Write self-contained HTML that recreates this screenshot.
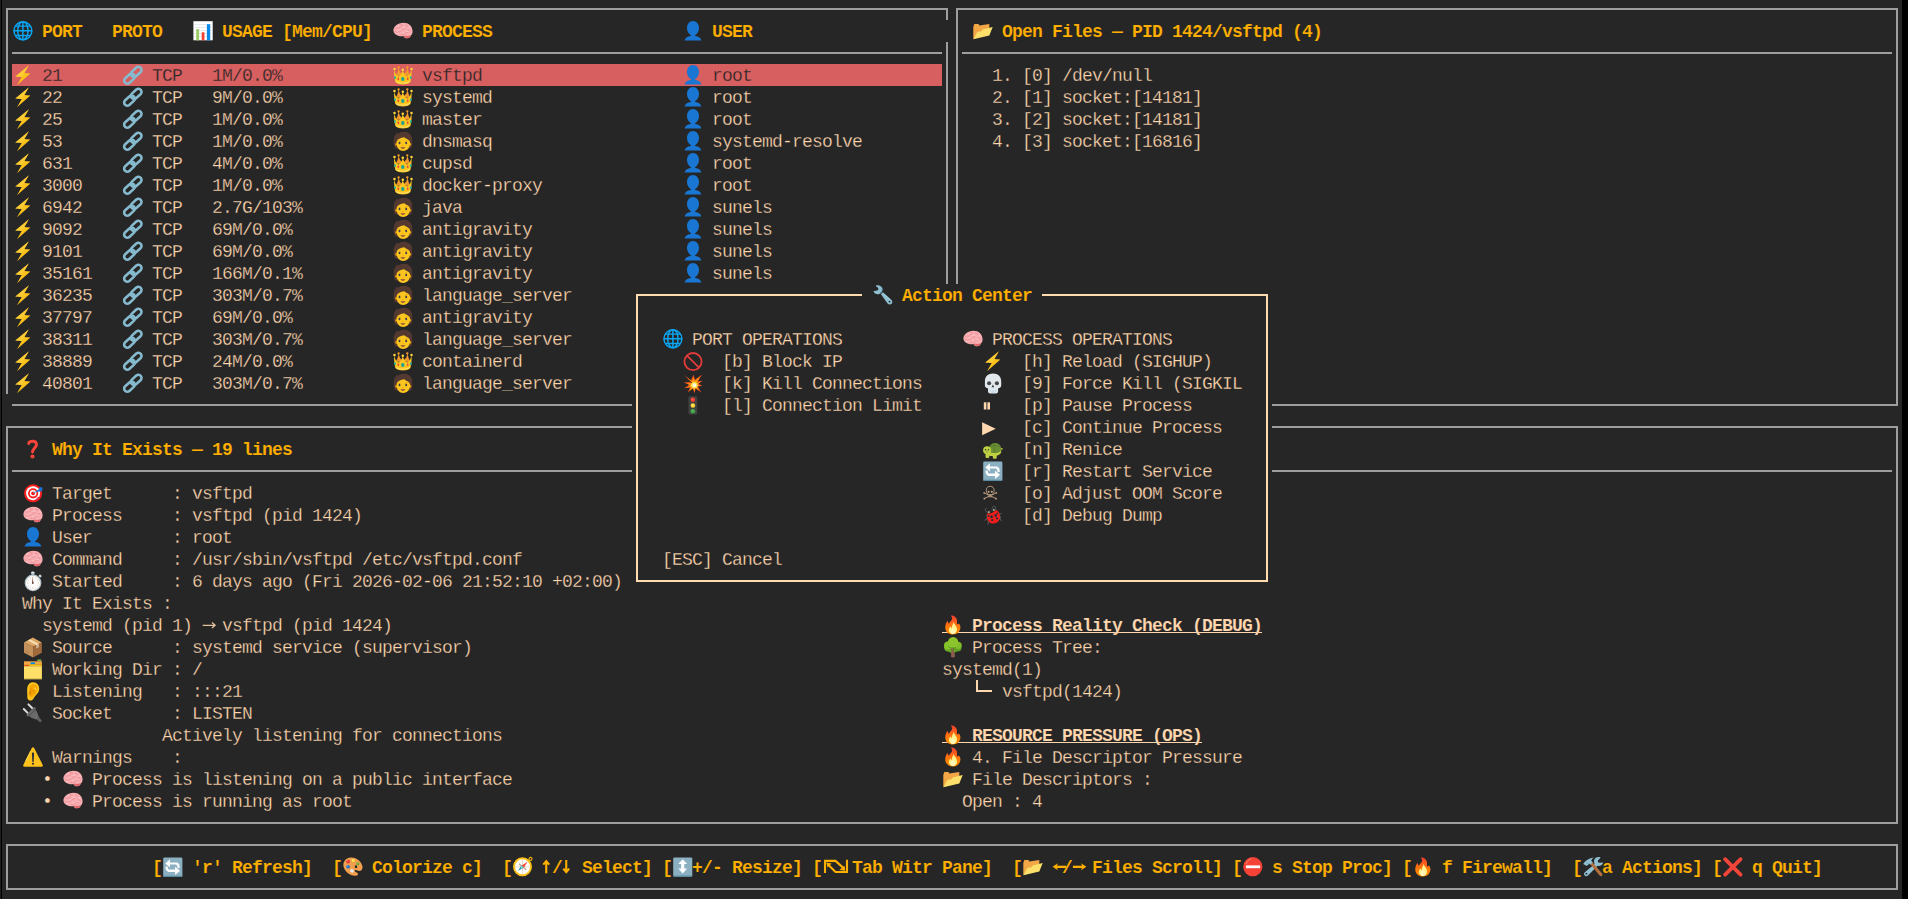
<!DOCTYPE html>
<html><head><meta charset="utf-8"><title>witr</title><style>
html,body{margin:0;padding:0}
body{width:1908px;height:899px;overflow:hidden;background:#262626;position:relative;font-family:"Liberation Mono",monospace}
#scr{position:absolute;left:0;top:0;width:1908px;height:899px;overflow:hidden;background:#262626}
.b{position:absolute}
.t{position:absolute;white-space:pre;font-family:"Liberation Mono",monospace;font-size:18px;line-height:22px;height:22px;letter-spacing:-0.8px;color:#ffd7af;margin-top:1.2px}
.t{-webkit-text-stroke:0.28px #262626}
.h{color:#ffaf00;font-weight:bold;-webkit-text-stroke:0.12px #262626}
.bt{font-weight:bold;-webkit-text-stroke:0.12px #262626}
.s{color:#262626;-webkit-text-stroke:0.28px #d75f5f}
.e{position:absolute;overflow:visible}
</style></head><body><div id="scr">
<svg width="0" height="0" style="position:absolute"><defs><linearGradient id="gfire" x1="0" y1="0" x2="0" y2="1"><stop offset="0" stop-color="#f23c30"/><stop offset=".3" stop-color="#fb5a1e"/><stop offset=".6" stop-color="#ff7a08"/><stop offset="1" stop-color="#ff9000"/></linearGradient></defs></svg>
<div class="b" style="left:0px;top:0px;width:1px;height:899px;background:#1d1d1d;"></div>
<div class="b" style="left:1px;top:0px;width:1px;height:899px;background:#000;"></div>
<div class="b" style="left:1902px;top:0px;width:6px;height:899px;background:#000;"></div>
<div class="b" style="left:6px;top:8px;width:942px;height:2px;background:#9e9e9e;"></div>
<div class="b" style="left:6px;top:8px;width:2px;height:386px;background:#9e9e9e;"></div>
<div class="b" style="left:946px;top:8px;width:2px;height:12px;background:#9e9e9e;"></div>
<div class="b" style="left:946px;top:42px;width:2px;height:363px;background:#9e9e9e;"></div>
<div class="b" style="left:12px;top:52px;width:930px;height:2px;background:#9e9e9e;"></div>
<div class="b" style="left:12px;top:404px;width:936px;height:2px;background:#9e9e9e;"></div>
<div class="b" style="left:956px;top:8px;width:942px;height:2px;background:#9e9e9e;"></div>
<div class="b" style="left:956px;top:8px;width:2px;height:398px;background:#9e9e9e;"></div>
<div class="b" style="left:1896px;top:8px;width:2px;height:398px;background:#9e9e9e;"></div>
<div class="b" style="left:962px;top:52px;width:930px;height:2px;background:#9e9e9e;"></div>
<div class="b" style="left:956px;top:404px;width:942px;height:2px;background:#9e9e9e;"></div>
<div class="b" style="left:6px;top:426px;width:1892px;height:2px;background:#9e9e9e;"></div>
<div class="b" style="left:6px;top:426px;width:2px;height:398px;background:#9e9e9e;"></div>
<div class="b" style="left:1896px;top:426px;width:2px;height:398px;background:#9e9e9e;"></div>
<div class="b" style="left:12px;top:470px;width:1880px;height:2px;background:#9e9e9e;"></div>
<div class="b" style="left:6px;top:822px;width:1892px;height:2px;background:#9e9e9e;"></div>
<div class="b" style="left:6px;top:844px;width:1892px;height:2px;background:#9e9e9e;"></div>
<div class="b" style="left:6px;top:844px;width:2px;height:46px;background:#9e9e9e;"></div>
<div class="b" style="left:1896px;top:844px;width:2px;height:46px;background:#9e9e9e;"></div>
<div class="b" style="left:6px;top:888px;width:1892px;height:2px;background:#9e9e9e;"></div>
<svg class="e" style="left:12.9px;top:20.7px" width="20" height="21" viewBox="0 0 20 21"><g fill="none" stroke="#0ba6f3" stroke-width="1.45"><circle cx="9.9" cy="9.8" r="9"/><ellipse cx="9.9" cy="9.8" rx="5.2" ry="9"/><path d="M9.9 .8v18M.9 9.8h18M2.6 5.1h14.6M2.6 14.4h14.6"/></g></svg>
<span class="t h" style="left:42px;top:20px">PORT</span>
<span class="t h" style="left:112px;top:20px">PROTO</span>
<svg class="e" style="left:192.9px;top:20.7px" width="20" height="21" viewBox="0 0 20 21"><rect x=".4" y=".2" width="19.3" height="19.1" fill="#fff"/><path d="M1.5 3.6h17M1.5 6.5h17M1.5 9.5h17M1.5 12.5h17M1.5 15.5h17" stroke="#e3e7ea" stroke-width=".9"/><rect x="3.2" y="8.1" width="2.9" height="11.2" fill="#9ccc65"/><rect x="8.7" y="11.3" width="2.7" height="8" fill="#f4402c"/><rect x="13.9" y="3.2" width="3.3" height="16.1" fill="#0a8ae8"/></svg>
<span class="t h" style="left:222px;top:20px">USAGE [Mem/CPU]</span>
<svg class="e" style="left:392.9px;top:20.7px" width="20" height="21" viewBox="0 0 20 21"><path d="M.4 9.600C.3 5.600 4.500 1.700 10.600 1.700c5.200 0 8.400 3.300 8.900 7.500.4 2.900-.6 4.600-2 5.600.2 1.500-1.600 2.500-3.600 2.500-1.800 0-3-.9-3.400-2.300-1.600.3-4.600.4-5.900-.5C2.400 14 .5 12.300.4 9.600z" fill="#f6acb0"/><path d="M10.700 14.600c1.800.4 4.900.5 6.800-.1.200 1.600-1.500 2.800-3.500 2.800-1.900 0-3.100-1.200-3.300-2.700z" fill="#e0686c"/><g fill="none" stroke="#ec8a90" stroke-width=".8"><path d="M2.500 7.500c1.500-1.500 2.500.5 4-.8s1.500-2.700 3.500-2.500M4.500 11.500c1-1.800 3-.5 4.200-2.200s3-1 4.300-2.700M7.500 13.800c1.500-1 2.800.3 4.200-1.200s2.700-.5 4.300-2M12 3.800c1 1.200 2.700.5 3.700 2.200M1.800 10.300c1 .3 1.700 1.500 2.700 1.200M14.500 8.500c1 .5 2 .2 3 1.200M6 5c.5-1 1.500-1.500 2.500-1.500"/></g><g fill="none" stroke="#fcd0d2" stroke-width=".8" opacity=".9"><path d="M3.500 5.800c1-1 2-1.300 3-1.300M9.500 6.500c1-.5 2-.5 3 .2M5.500 9.300c.8-.6 1.800-.8 2.600-.3M13 11c1-.6 2-.6 3-.2M3 12.300c.8.500 1.600.6 2.400.4M9 12c.8-.5 1.600-.5 2.400-.2M15.500 5.500c.8.600 1.300 1.400 1.600 2.300"/></g></svg>
<span class="t h" style="left:422px;top:20px">PROCESS</span>
<svg class="e" style="left:682.9px;top:20.7px" width="20" height="21" viewBox="0 0 20 21"><path d="M10 0c3.400 0 5.900 2.800 6 6.800.1 3.300-1.700 6.300-4 7.400l.3.700c3.300.5 5.900 2.100 6.100 4.700H1.600c.2-2.600 2.800-4.200 6.100-4.700l.3-.7c-2.300-1.100-4.100-4.100-4-7.400C4.100 2.800 6.600 0 10 0z" fill="#1976d2"/></svg>
<span class="t h" style="left:712px;top:20px">USER</span>
<div class="b" style="left:12px;top:64px;width:930px;height:22px;background:#d75f5f;"></div>
<svg class="e" style="left:12.9px;top:64.7px" width="20" height="21" viewBox="0 0 20 21"><path d="M15.900.2L2.300 11.400l6.400.600L4 20.200 17.400 8.500l-6-.4z" fill="#fbc21b"/><path d="M15.900.2L2.300 11.400l6.400.600 1.200-2.100 1.500-1.800z" fill="#ffd54a" opacity=".55"/></svg>
<span class="t s" style="left:42px;top:64px">21</span>
<svg class="e" style="left:122.9px;top:64.7px" width="20" height="21" viewBox="0 0 20 21"><g fill="none" stroke="#86bace" stroke-width="2.600"><rect x="-6.100" y="-3.100" width="12.200" height="6.200" rx="3.100" transform="translate(13.200 6.900) rotate(-42)"/><rect x="-6.100" y="-3.100" width="12.200" height="6.200" rx="3.100" transform="translate(6.500 13.600) rotate(-42)"/></g></svg>
<span class="t s" style="left:152px;top:64px">TCP</span>
<span class="t s" style="left:212px;top:64px">1M/0.0%</span>
<svg class="e" style="left:392.9px;top:64.7px" width="20" height="21" viewBox="0 0 20 21"><path d="M5.600 2.200c-.4 3.400-1.300 6.300-3 8.500h15c-1.700-2.200-2.600-5.100-3-8.500-.5 3.300-1.900 6.100-4.700 7.300C7.300 8.300 6.100 5.500 5.600 2.200z" fill="#f29a2e"/><circle cx="5.600" cy="2.500" r="1.150" fill="#f9a024"/><circle cx="14.300" cy="2.500" r="1.150" fill="#f9a024"/><path d="M1.300 4.200C1.700 8 3.200 10.400 5.700 11.600 8 10.300 9.300 7.800 9.800 4.600c.5 3.200 1.800 5.700 4.100 7 2.500-1.200 4-3.600 4.500-7.400.6 4-.1 8.800-1 12.700-1.800 1.800-4.600 2.500-7.500 2.500s-5.700-.7-7.500-2.500C1.500 13 .7 8.200 1.300 4.200z" fill="#fcc51f"/><circle cx="1.500" cy="4.100" r="1.250" fill="#ffd638"/><circle cx="18.500" cy="4.100" r="1.250" fill="#ffd638"/><circle cx="9.800" cy="4.800" r="1.300" fill="#ffd638"/><path d="M2.600 16.300c2 1.400 4.600 1.800 7.200 1.800s5.200-.4 7.200-1.800" fill="none" stroke="#fff3a0" stroke-width=".8" opacity=".8"/><ellipse cx="9.800" cy="14" rx="1.700" ry="2" fill="#17a398"/><ellipse cx="5.300" cy="13.800" rx=".85" ry="1.300" fill="#f2453d"/><ellipse cx="14.700" cy="13.800" rx=".85" ry="1.300" fill="#f2453d"/><ellipse cx="2" cy="12.400" rx=".9" ry="1.500" fill="#26b5a0"/><ellipse cx="17.800" cy="12.400" rx=".9" ry="1.500" fill="#26b5a0"/></svg>
<span class="t s" style="left:422px;top:64px">vsftpd</span>
<svg class="e" style="left:682.9px;top:64.7px" width="20" height="21" viewBox="0 0 20 21"><path d="M10 0c3.400 0 5.900 2.800 6 6.800.1 3.300-1.700 6.300-4 7.400l.3.700c3.300.5 5.900 2.100 6.100 4.700H1.600c.2-2.600 2.800-4.200 6.100-4.700l.3-.7c-2.300-1.100-4.100-4.100-4-7.400C4.100 2.800 6.600 0 10 0z" fill="#1976d2"/></svg>
<span class="t s" style="left:712px;top:64px">root</span>
<svg class="e" style="left:12.9px;top:86.7px" width="20" height="21" viewBox="0 0 20 21"><path d="M15.900.2L2.300 11.400l6.400.600L4 20.200 17.400 8.500l-6-.4z" fill="#fbc21b"/><path d="M15.900.2L2.300 11.400l6.400.600 1.200-2.100 1.500-1.800z" fill="#ffd54a" opacity=".55"/></svg>
<span class="t " style="left:42px;top:86px">22</span>
<svg class="e" style="left:122.9px;top:86.7px" width="20" height="21" viewBox="0 0 20 21"><g fill="none" stroke="#86bace" stroke-width="2.600"><rect x="-6.100" y="-3.100" width="12.200" height="6.200" rx="3.100" transform="translate(13.200 6.900) rotate(-42)"/><rect x="-6.100" y="-3.100" width="12.200" height="6.200" rx="3.100" transform="translate(6.500 13.600) rotate(-42)"/></g></svg>
<span class="t " style="left:152px;top:86px">TCP</span>
<span class="t " style="left:212px;top:86px">9M/0.0%</span>
<svg class="e" style="left:392.9px;top:86.7px" width="20" height="21" viewBox="0 0 20 21"><path d="M5.600 2.200c-.4 3.400-1.300 6.300-3 8.500h15c-1.700-2.200-2.600-5.100-3-8.500-.5 3.300-1.900 6.100-4.700 7.300C7.300 8.300 6.100 5.500 5.600 2.200z" fill="#f29a2e"/><circle cx="5.600" cy="2.500" r="1.150" fill="#f9a024"/><circle cx="14.300" cy="2.500" r="1.150" fill="#f9a024"/><path d="M1.300 4.200C1.700 8 3.200 10.400 5.700 11.600 8 10.300 9.300 7.800 9.800 4.600c.5 3.200 1.800 5.700 4.100 7 2.500-1.200 4-3.600 4.500-7.400.6 4-.1 8.800-1 12.700-1.800 1.800-4.600 2.500-7.500 2.500s-5.700-.7-7.500-2.500C1.500 13 .7 8.200 1.300 4.200z" fill="#fcc51f"/><circle cx="1.500" cy="4.100" r="1.250" fill="#ffd638"/><circle cx="18.500" cy="4.100" r="1.250" fill="#ffd638"/><circle cx="9.800" cy="4.800" r="1.300" fill="#ffd638"/><path d="M2.600 16.300c2 1.400 4.600 1.800 7.200 1.800s5.200-.4 7.200-1.800" fill="none" stroke="#fff3a0" stroke-width=".8" opacity=".8"/><ellipse cx="9.800" cy="14" rx="1.700" ry="2" fill="#17a398"/><ellipse cx="5.300" cy="13.800" rx=".85" ry="1.300" fill="#f2453d"/><ellipse cx="14.700" cy="13.800" rx=".85" ry="1.300" fill="#f2453d"/><ellipse cx="2" cy="12.400" rx=".9" ry="1.500" fill="#26b5a0"/><ellipse cx="17.800" cy="12.400" rx=".9" ry="1.500" fill="#26b5a0"/></svg>
<span class="t " style="left:422px;top:86px">systemd</span>
<svg class="e" style="left:682.9px;top:86.7px" width="20" height="21" viewBox="0 0 20 21"><path d="M10 0c3.400 0 5.900 2.800 6 6.800.1 3.300-1.700 6.300-4 7.400l.3.700c3.300.5 5.900 2.100 6.100 4.700H1.600c.2-2.600 2.800-4.200 6.100-4.700l.3-.7c-2.300-1.100-4.100-4.100-4-7.400C4.100 2.800 6.600 0 10 0z" fill="#1976d2"/></svg>
<span class="t " style="left:712px;top:86px">root</span>
<svg class="e" style="left:12.9px;top:108.7px" width="20" height="21" viewBox="0 0 20 21"><path d="M15.900.2L2.300 11.400l6.400.600L4 20.200 17.400 8.500l-6-.4z" fill="#fbc21b"/><path d="M15.900.2L2.300 11.400l6.400.600 1.200-2.100 1.500-1.800z" fill="#ffd54a" opacity=".55"/></svg>
<span class="t " style="left:42px;top:108px">25</span>
<svg class="e" style="left:122.9px;top:108.7px" width="20" height="21" viewBox="0 0 20 21"><g fill="none" stroke="#86bace" stroke-width="2.600"><rect x="-6.100" y="-3.100" width="12.200" height="6.200" rx="3.100" transform="translate(13.200 6.900) rotate(-42)"/><rect x="-6.100" y="-3.100" width="12.200" height="6.200" rx="3.100" transform="translate(6.500 13.600) rotate(-42)"/></g></svg>
<span class="t " style="left:152px;top:108px">TCP</span>
<span class="t " style="left:212px;top:108px">1M/0.0%</span>
<svg class="e" style="left:392.9px;top:108.7px" width="20" height="21" viewBox="0 0 20 21"><path d="M5.600 2.200c-.4 3.400-1.300 6.300-3 8.500h15c-1.700-2.200-2.600-5.100-3-8.500-.5 3.300-1.900 6.100-4.700 7.300C7.300 8.300 6.100 5.500 5.600 2.200z" fill="#f29a2e"/><circle cx="5.600" cy="2.500" r="1.150" fill="#f9a024"/><circle cx="14.300" cy="2.500" r="1.150" fill="#f9a024"/><path d="M1.300 4.200C1.700 8 3.200 10.400 5.700 11.600 8 10.300 9.300 7.800 9.800 4.600c.5 3.200 1.800 5.700 4.100 7 2.500-1.200 4-3.600 4.500-7.400.6 4-.1 8.800-1 12.700-1.800 1.800-4.600 2.500-7.500 2.500s-5.700-.7-7.500-2.500C1.500 13 .7 8.200 1.300 4.200z" fill="#fcc51f"/><circle cx="1.500" cy="4.100" r="1.250" fill="#ffd638"/><circle cx="18.500" cy="4.100" r="1.250" fill="#ffd638"/><circle cx="9.800" cy="4.800" r="1.300" fill="#ffd638"/><path d="M2.600 16.300c2 1.400 4.600 1.800 7.200 1.800s5.200-.4 7.200-1.800" fill="none" stroke="#fff3a0" stroke-width=".8" opacity=".8"/><ellipse cx="9.800" cy="14" rx="1.700" ry="2" fill="#17a398"/><ellipse cx="5.300" cy="13.800" rx=".85" ry="1.300" fill="#f2453d"/><ellipse cx="14.700" cy="13.800" rx=".85" ry="1.300" fill="#f2453d"/><ellipse cx="2" cy="12.400" rx=".9" ry="1.500" fill="#26b5a0"/><ellipse cx="17.800" cy="12.400" rx=".9" ry="1.500" fill="#26b5a0"/></svg>
<span class="t " style="left:422px;top:108px">master</span>
<svg class="e" style="left:682.9px;top:108.7px" width="20" height="21" viewBox="0 0 20 21"><path d="M10 0c3.400 0 5.900 2.800 6 6.800.1 3.300-1.700 6.300-4 7.400l.3.700c3.300.5 5.900 2.100 6.100 4.700H1.600c.2-2.600 2.800-4.200 6.100-4.700l.3-.7c-2.300-1.100-4.100-4.100-4-7.400C4.100 2.800 6.600 0 10 0z" fill="#1976d2"/></svg>
<span class="t " style="left:712px;top:108px">root</span>
<svg class="e" style="left:12.9px;top:130.7px" width="20" height="21" viewBox="0 0 20 21"><path d="M15.900.2L2.300 11.400l6.400.600L4 20.200 17.400 8.500l-6-.4z" fill="#fbc21b"/><path d="M15.900.2L2.300 11.400l6.400.600 1.200-2.100 1.500-1.800z" fill="#ffd54a" opacity=".55"/></svg>
<span class="t " style="left:42px;top:130px">53</span>
<svg class="e" style="left:122.9px;top:130.7px" width="20" height="21" viewBox="0 0 20 21"><g fill="none" stroke="#86bace" stroke-width="2.600"><rect x="-6.100" y="-3.100" width="12.200" height="6.200" rx="3.100" transform="translate(13.200 6.900) rotate(-42)"/><rect x="-6.100" y="-3.100" width="12.200" height="6.200" rx="3.100" transform="translate(6.500 13.600) rotate(-42)"/></g></svg>
<span class="t " style="left:152px;top:130px">TCP</span>
<span class="t " style="left:212px;top:130px">1M/0.0%</span>
<svg class="e" style="left:392.9px;top:130.7px" width="20" height="21" viewBox="0 0 20 21"><path d="M.7 10.500C.3 5.500 3.300 1.800 4.800 2.900 6.500 1.300 9 .6 11.200 .7c5.600.2 8.700 4.300 7.900 9.200.5 2.100.2 3.900-.500 5 .6 1.200-.100 2.500-1.400 2.700H3c-1.300-.2-2-1.500-1.400-2.700-.8-1.100-1.100-2.600-.9-4.400z" fill="#543930"/><path d="M3.500 1.300l1.600 1.500-2 .7z" fill="#543930"/><ellipse cx="3.100" cy="13.500" rx=".9" ry="1.400" fill="#e59600"/><ellipse cx="17.400" cy="13.400" rx=".9" ry="1.400" fill="#e59600"/><path d="M3.500 12.300c0-2.500 1-3.700 2.800-4.600 1.500-.8 3.200-1.200 4.900-1.500 1.100 1 2.400 1.500 3.700 2.200 1.500.800 2.200 2 2.200 3.900 0 4.300-3 7.700-6.800 7.700s-6.800-3.200-6.800-7.700z" fill="#fcc51f"/><ellipse cx="6.500" cy="12" rx=".95" ry="1.250" fill="#3b3b48"/><ellipse cx="13.200" cy="12" rx=".95" ry="1.250" fill="#3b3b48"/><path d="M5.500 10.200c.6-.4 1.400-.4 2 0M12.200 10.200c.6-.4 1.400-.4 2 0" stroke="#c98a1a" stroke-width=".6" fill="none"/><path d="M7.600 15.900c1.300.6 3.200.6 4.500 0-.2 1.200-1.100 1.800-2.250 1.800s-2.050-.6-2.250-1.800z" fill="#8a4b3c"/><path d="M9 14.600c.5.400 1.100.4 1.600 0" stroke="#f0a000" stroke-width=".7" fill="none"/></svg>
<span class="t " style="left:422px;top:130px">dnsmasq</span>
<svg class="e" style="left:682.9px;top:130.7px" width="20" height="21" viewBox="0 0 20 21"><path d="M10 0c3.400 0 5.900 2.800 6 6.800.1 3.300-1.700 6.300-4 7.400l.3.700c3.300.5 5.900 2.100 6.100 4.700H1.600c.2-2.600 2.800-4.200 6.100-4.700l.3-.7c-2.300-1.100-4.100-4.100-4-7.400C4.100 2.800 6.600 0 10 0z" fill="#1976d2"/></svg>
<span class="t " style="left:712px;top:130px">systemd-resolve</span>
<svg class="e" style="left:12.9px;top:152.7px" width="20" height="21" viewBox="0 0 20 21"><path d="M15.900.2L2.300 11.400l6.400.600L4 20.200 17.400 8.500l-6-.4z" fill="#fbc21b"/><path d="M15.900.2L2.300 11.400l6.400.600 1.200-2.100 1.500-1.800z" fill="#ffd54a" opacity=".55"/></svg>
<span class="t " style="left:42px;top:152px">631</span>
<svg class="e" style="left:122.9px;top:152.7px" width="20" height="21" viewBox="0 0 20 21"><g fill="none" stroke="#86bace" stroke-width="2.600"><rect x="-6.100" y="-3.100" width="12.200" height="6.200" rx="3.100" transform="translate(13.200 6.900) rotate(-42)"/><rect x="-6.100" y="-3.100" width="12.200" height="6.200" rx="3.100" transform="translate(6.500 13.600) rotate(-42)"/></g></svg>
<span class="t " style="left:152px;top:152px">TCP</span>
<span class="t " style="left:212px;top:152px">4M/0.0%</span>
<svg class="e" style="left:392.9px;top:152.7px" width="20" height="21" viewBox="0 0 20 21"><path d="M5.600 2.200c-.4 3.400-1.300 6.300-3 8.500h15c-1.700-2.200-2.600-5.100-3-8.500-.5 3.300-1.900 6.100-4.700 7.300C7.300 8.300 6.100 5.500 5.600 2.200z" fill="#f29a2e"/><circle cx="5.600" cy="2.500" r="1.150" fill="#f9a024"/><circle cx="14.300" cy="2.500" r="1.150" fill="#f9a024"/><path d="M1.300 4.200C1.700 8 3.200 10.400 5.700 11.600 8 10.300 9.300 7.800 9.800 4.600c.5 3.200 1.800 5.700 4.100 7 2.500-1.200 4-3.600 4.500-7.400.6 4-.1 8.800-1 12.700-1.800 1.800-4.600 2.500-7.500 2.500s-5.700-.7-7.500-2.500C1.500 13 .7 8.200 1.300 4.200z" fill="#fcc51f"/><circle cx="1.500" cy="4.100" r="1.250" fill="#ffd638"/><circle cx="18.500" cy="4.100" r="1.250" fill="#ffd638"/><circle cx="9.800" cy="4.800" r="1.300" fill="#ffd638"/><path d="M2.600 16.300c2 1.400 4.600 1.800 7.200 1.800s5.200-.4 7.200-1.800" fill="none" stroke="#fff3a0" stroke-width=".8" opacity=".8"/><ellipse cx="9.800" cy="14" rx="1.700" ry="2" fill="#17a398"/><ellipse cx="5.300" cy="13.800" rx=".85" ry="1.300" fill="#f2453d"/><ellipse cx="14.700" cy="13.800" rx=".85" ry="1.300" fill="#f2453d"/><ellipse cx="2" cy="12.400" rx=".9" ry="1.500" fill="#26b5a0"/><ellipse cx="17.800" cy="12.400" rx=".9" ry="1.500" fill="#26b5a0"/></svg>
<span class="t " style="left:422px;top:152px">cupsd</span>
<svg class="e" style="left:682.9px;top:152.7px" width="20" height="21" viewBox="0 0 20 21"><path d="M10 0c3.400 0 5.900 2.800 6 6.800.1 3.300-1.700 6.300-4 7.400l.3.700c3.300.5 5.900 2.100 6.100 4.700H1.600c.2-2.600 2.800-4.200 6.100-4.700l.3-.7c-2.300-1.100-4.100-4.100-4-7.400C4.100 2.800 6.600 0 10 0z" fill="#1976d2"/></svg>
<span class="t " style="left:712px;top:152px">root</span>
<svg class="e" style="left:12.9px;top:174.7px" width="20" height="21" viewBox="0 0 20 21"><path d="M15.900.2L2.300 11.400l6.400.600L4 20.200 17.400 8.500l-6-.4z" fill="#fbc21b"/><path d="M15.900.2L2.300 11.400l6.400.600 1.200-2.100 1.500-1.800z" fill="#ffd54a" opacity=".55"/></svg>
<span class="t " style="left:42px;top:174px">3000</span>
<svg class="e" style="left:122.9px;top:174.7px" width="20" height="21" viewBox="0 0 20 21"><g fill="none" stroke="#86bace" stroke-width="2.600"><rect x="-6.100" y="-3.100" width="12.200" height="6.200" rx="3.100" transform="translate(13.200 6.900) rotate(-42)"/><rect x="-6.100" y="-3.100" width="12.200" height="6.200" rx="3.100" transform="translate(6.500 13.600) rotate(-42)"/></g></svg>
<span class="t " style="left:152px;top:174px">TCP</span>
<span class="t " style="left:212px;top:174px">1M/0.0%</span>
<svg class="e" style="left:392.9px;top:174.7px" width="20" height="21" viewBox="0 0 20 21"><path d="M5.600 2.200c-.4 3.400-1.300 6.300-3 8.500h15c-1.700-2.200-2.600-5.100-3-8.500-.5 3.300-1.900 6.100-4.700 7.300C7.300 8.300 6.100 5.500 5.600 2.200z" fill="#f29a2e"/><circle cx="5.600" cy="2.500" r="1.150" fill="#f9a024"/><circle cx="14.300" cy="2.500" r="1.150" fill="#f9a024"/><path d="M1.300 4.200C1.700 8 3.200 10.400 5.700 11.600 8 10.300 9.300 7.800 9.800 4.600c.5 3.200 1.800 5.700 4.100 7 2.500-1.200 4-3.600 4.500-7.400.6 4-.1 8.800-1 12.700-1.800 1.800-4.600 2.500-7.500 2.500s-5.700-.7-7.500-2.500C1.500 13 .7 8.200 1.300 4.200z" fill="#fcc51f"/><circle cx="1.500" cy="4.100" r="1.250" fill="#ffd638"/><circle cx="18.500" cy="4.100" r="1.250" fill="#ffd638"/><circle cx="9.800" cy="4.800" r="1.300" fill="#ffd638"/><path d="M2.600 16.300c2 1.400 4.600 1.800 7.200 1.800s5.200-.4 7.200-1.800" fill="none" stroke="#fff3a0" stroke-width=".8" opacity=".8"/><ellipse cx="9.800" cy="14" rx="1.700" ry="2" fill="#17a398"/><ellipse cx="5.300" cy="13.800" rx=".85" ry="1.300" fill="#f2453d"/><ellipse cx="14.700" cy="13.800" rx=".85" ry="1.300" fill="#f2453d"/><ellipse cx="2" cy="12.400" rx=".9" ry="1.500" fill="#26b5a0"/><ellipse cx="17.800" cy="12.400" rx=".9" ry="1.500" fill="#26b5a0"/></svg>
<span class="t " style="left:422px;top:174px">docker-proxy</span>
<svg class="e" style="left:682.9px;top:174.7px" width="20" height="21" viewBox="0 0 20 21"><path d="M10 0c3.400 0 5.900 2.800 6 6.800.1 3.300-1.700 6.300-4 7.400l.3.700c3.300.5 5.900 2.100 6.100 4.700H1.600c.2-2.600 2.800-4.200 6.100-4.700l.3-.7c-2.300-1.100-4.100-4.100-4-7.400C4.100 2.800 6.600 0 10 0z" fill="#1976d2"/></svg>
<span class="t " style="left:712px;top:174px">root</span>
<svg class="e" style="left:12.9px;top:196.7px" width="20" height="21" viewBox="0 0 20 21"><path d="M15.900.2L2.300 11.400l6.400.600L4 20.200 17.400 8.500l-6-.4z" fill="#fbc21b"/><path d="M15.900.2L2.300 11.400l6.400.600 1.200-2.100 1.500-1.800z" fill="#ffd54a" opacity=".55"/></svg>
<span class="t " style="left:42px;top:196px">6942</span>
<svg class="e" style="left:122.9px;top:196.7px" width="20" height="21" viewBox="0 0 20 21"><g fill="none" stroke="#86bace" stroke-width="2.600"><rect x="-6.100" y="-3.100" width="12.200" height="6.200" rx="3.100" transform="translate(13.200 6.900) rotate(-42)"/><rect x="-6.100" y="-3.100" width="12.200" height="6.200" rx="3.100" transform="translate(6.500 13.600) rotate(-42)"/></g></svg>
<span class="t " style="left:152px;top:196px">TCP</span>
<span class="t " style="left:212px;top:196px">2.7G/103%</span>
<svg class="e" style="left:392.9px;top:196.7px" width="20" height="21" viewBox="0 0 20 21"><path d="M.7 10.500C.3 5.500 3.300 1.800 4.800 2.900 6.500 1.300 9 .6 11.200 .7c5.600.2 8.700 4.300 7.900 9.200.5 2.100.2 3.900-.500 5 .6 1.200-.100 2.500-1.400 2.700H3c-1.300-.2-2-1.500-1.400-2.700-.8-1.100-1.100-2.600-.9-4.400z" fill="#543930"/><path d="M3.500 1.300l1.600 1.500-2 .7z" fill="#543930"/><ellipse cx="3.100" cy="13.500" rx=".9" ry="1.400" fill="#e59600"/><ellipse cx="17.400" cy="13.400" rx=".9" ry="1.400" fill="#e59600"/><path d="M3.500 12.300c0-2.500 1-3.700 2.800-4.600 1.500-.8 3.200-1.200 4.900-1.500 1.100 1 2.400 1.500 3.700 2.200 1.500.800 2.200 2 2.200 3.900 0 4.300-3 7.700-6.800 7.700s-6.800-3.200-6.800-7.700z" fill="#fcc51f"/><ellipse cx="6.500" cy="12" rx=".95" ry="1.250" fill="#3b3b48"/><ellipse cx="13.200" cy="12" rx=".95" ry="1.250" fill="#3b3b48"/><path d="M5.500 10.200c.6-.4 1.400-.4 2 0M12.200 10.200c.6-.4 1.400-.4 2 0" stroke="#c98a1a" stroke-width=".6" fill="none"/><path d="M7.600 15.900c1.300.6 3.200.6 4.500 0-.2 1.200-1.100 1.800-2.250 1.800s-2.050-.6-2.250-1.800z" fill="#8a4b3c"/><path d="M9 14.600c.5.400 1.100.4 1.600 0" stroke="#f0a000" stroke-width=".7" fill="none"/></svg>
<span class="t " style="left:422px;top:196px">java</span>
<svg class="e" style="left:682.9px;top:196.7px" width="20" height="21" viewBox="0 0 20 21"><path d="M10 0c3.400 0 5.900 2.800 6 6.800.1 3.300-1.700 6.300-4 7.400l.3.700c3.300.5 5.900 2.100 6.100 4.700H1.600c.2-2.600 2.800-4.200 6.100-4.700l.3-.7c-2.300-1.100-4.100-4.100-4-7.400C4.100 2.800 6.600 0 10 0z" fill="#1976d2"/></svg>
<span class="t " style="left:712px;top:196px">sunels</span>
<svg class="e" style="left:12.9px;top:218.7px" width="20" height="21" viewBox="0 0 20 21"><path d="M15.900.2L2.300 11.400l6.400.600L4 20.200 17.400 8.500l-6-.4z" fill="#fbc21b"/><path d="M15.900.2L2.300 11.400l6.400.600 1.200-2.100 1.500-1.800z" fill="#ffd54a" opacity=".55"/></svg>
<span class="t " style="left:42px;top:218px">9092</span>
<svg class="e" style="left:122.9px;top:218.7px" width="20" height="21" viewBox="0 0 20 21"><g fill="none" stroke="#86bace" stroke-width="2.600"><rect x="-6.100" y="-3.100" width="12.200" height="6.200" rx="3.100" transform="translate(13.200 6.900) rotate(-42)"/><rect x="-6.100" y="-3.100" width="12.200" height="6.200" rx="3.100" transform="translate(6.500 13.600) rotate(-42)"/></g></svg>
<span class="t " style="left:152px;top:218px">TCP</span>
<span class="t " style="left:212px;top:218px">69M/0.0%</span>
<svg class="e" style="left:392.9px;top:218.7px" width="20" height="21" viewBox="0 0 20 21"><path d="M.7 10.500C.3 5.500 3.300 1.800 4.800 2.900 6.500 1.300 9 .6 11.200 .7c5.600.2 8.700 4.300 7.900 9.200.5 2.100.2 3.900-.500 5 .6 1.200-.100 2.500-1.400 2.700H3c-1.300-.2-2-1.500-1.400-2.700-.8-1.100-1.100-2.600-.9-4.400z" fill="#543930"/><path d="M3.500 1.300l1.600 1.500-2 .7z" fill="#543930"/><ellipse cx="3.100" cy="13.500" rx=".9" ry="1.400" fill="#e59600"/><ellipse cx="17.400" cy="13.400" rx=".9" ry="1.400" fill="#e59600"/><path d="M3.500 12.300c0-2.500 1-3.700 2.800-4.600 1.500-.8 3.200-1.200 4.900-1.500 1.100 1 2.400 1.500 3.700 2.200 1.500.800 2.200 2 2.200 3.900 0 4.300-3 7.700-6.800 7.700s-6.800-3.200-6.800-7.700z" fill="#fcc51f"/><ellipse cx="6.500" cy="12" rx=".95" ry="1.250" fill="#3b3b48"/><ellipse cx="13.200" cy="12" rx=".95" ry="1.250" fill="#3b3b48"/><path d="M5.500 10.200c.6-.4 1.400-.4 2 0M12.200 10.200c.6-.4 1.400-.4 2 0" stroke="#c98a1a" stroke-width=".6" fill="none"/><path d="M7.600 15.900c1.300.6 3.200.6 4.500 0-.2 1.200-1.100 1.800-2.250 1.800s-2.050-.6-2.250-1.800z" fill="#8a4b3c"/><path d="M9 14.600c.5.400 1.100.4 1.600 0" stroke="#f0a000" stroke-width=".7" fill="none"/></svg>
<span class="t " style="left:422px;top:218px">antigravity</span>
<svg class="e" style="left:682.9px;top:218.7px" width="20" height="21" viewBox="0 0 20 21"><path d="M10 0c3.400 0 5.900 2.800 6 6.800.1 3.300-1.700 6.300-4 7.400l.3.700c3.300.5 5.900 2.100 6.100 4.700H1.600c.2-2.600 2.800-4.200 6.100-4.700l.3-.7c-2.300-1.100-4.100-4.100-4-7.400C4.100 2.800 6.600 0 10 0z" fill="#1976d2"/></svg>
<span class="t " style="left:712px;top:218px">sunels</span>
<svg class="e" style="left:12.9px;top:240.7px" width="20" height="21" viewBox="0 0 20 21"><path d="M15.900.2L2.300 11.400l6.400.600L4 20.200 17.400 8.500l-6-.4z" fill="#fbc21b"/><path d="M15.900.2L2.300 11.400l6.400.600 1.200-2.100 1.500-1.800z" fill="#ffd54a" opacity=".55"/></svg>
<span class="t " style="left:42px;top:240px">9101</span>
<svg class="e" style="left:122.9px;top:240.7px" width="20" height="21" viewBox="0 0 20 21"><g fill="none" stroke="#86bace" stroke-width="2.600"><rect x="-6.100" y="-3.100" width="12.200" height="6.200" rx="3.100" transform="translate(13.200 6.900) rotate(-42)"/><rect x="-6.100" y="-3.100" width="12.200" height="6.200" rx="3.100" transform="translate(6.500 13.600) rotate(-42)"/></g></svg>
<span class="t " style="left:152px;top:240px">TCP</span>
<span class="t " style="left:212px;top:240px">69M/0.0%</span>
<svg class="e" style="left:392.9px;top:240.7px" width="20" height="21" viewBox="0 0 20 21"><path d="M.7 10.500C.3 5.500 3.300 1.800 4.800 2.900 6.500 1.300 9 .6 11.200 .7c5.600.2 8.700 4.300 7.900 9.200.5 2.100.2 3.900-.500 5 .6 1.200-.100 2.500-1.400 2.700H3c-1.300-.2-2-1.500-1.400-2.700-.8-1.100-1.100-2.600-.9-4.400z" fill="#543930"/><path d="M3.500 1.300l1.600 1.500-2 .7z" fill="#543930"/><ellipse cx="3.100" cy="13.500" rx=".9" ry="1.400" fill="#e59600"/><ellipse cx="17.400" cy="13.400" rx=".9" ry="1.400" fill="#e59600"/><path d="M3.500 12.300c0-2.500 1-3.700 2.800-4.600 1.500-.8 3.200-1.200 4.900-1.500 1.100 1 2.400 1.500 3.700 2.200 1.500.800 2.200 2 2.200 3.900 0 4.300-3 7.700-6.800 7.700s-6.800-3.200-6.800-7.700z" fill="#fcc51f"/><ellipse cx="6.500" cy="12" rx=".95" ry="1.250" fill="#3b3b48"/><ellipse cx="13.200" cy="12" rx=".95" ry="1.250" fill="#3b3b48"/><path d="M5.500 10.200c.6-.4 1.400-.4 2 0M12.200 10.200c.6-.4 1.400-.4 2 0" stroke="#c98a1a" stroke-width=".6" fill="none"/><path d="M7.600 15.900c1.300.6 3.200.6 4.500 0-.2 1.200-1.100 1.800-2.250 1.800s-2.050-.6-2.250-1.800z" fill="#8a4b3c"/><path d="M9 14.600c.5.400 1.100.4 1.600 0" stroke="#f0a000" stroke-width=".7" fill="none"/></svg>
<span class="t " style="left:422px;top:240px">antigravity</span>
<svg class="e" style="left:682.9px;top:240.7px" width="20" height="21" viewBox="0 0 20 21"><path d="M10 0c3.400 0 5.900 2.800 6 6.800.1 3.300-1.700 6.300-4 7.400l.3.700c3.300.5 5.900 2.100 6.100 4.700H1.600c.2-2.600 2.800-4.200 6.100-4.700l.3-.7c-2.300-1.100-4.100-4.100-4-7.400C4.100 2.800 6.600 0 10 0z" fill="#1976d2"/></svg>
<span class="t " style="left:712px;top:240px">sunels</span>
<svg class="e" style="left:12.9px;top:262.7px" width="20" height="21" viewBox="0 0 20 21"><path d="M15.900.2L2.300 11.400l6.400.600L4 20.200 17.400 8.500l-6-.4z" fill="#fbc21b"/><path d="M15.900.2L2.300 11.400l6.400.600 1.200-2.100 1.500-1.800z" fill="#ffd54a" opacity=".55"/></svg>
<span class="t " style="left:42px;top:262px">35161</span>
<svg class="e" style="left:122.9px;top:262.7px" width="20" height="21" viewBox="0 0 20 21"><g fill="none" stroke="#86bace" stroke-width="2.600"><rect x="-6.100" y="-3.100" width="12.200" height="6.200" rx="3.100" transform="translate(13.200 6.900) rotate(-42)"/><rect x="-6.100" y="-3.100" width="12.200" height="6.200" rx="3.100" transform="translate(6.500 13.600) rotate(-42)"/></g></svg>
<span class="t " style="left:152px;top:262px">TCP</span>
<span class="t " style="left:212px;top:262px">166M/0.1%</span>
<svg class="e" style="left:392.9px;top:262.7px" width="20" height="21" viewBox="0 0 20 21"><path d="M.7 10.500C.3 5.500 3.300 1.800 4.800 2.900 6.500 1.300 9 .6 11.200 .7c5.600.2 8.700 4.300 7.900 9.200.5 2.100.2 3.900-.500 5 .6 1.200-.100 2.500-1.400 2.700H3c-1.300-.2-2-1.500-1.400-2.700-.8-1.100-1.100-2.600-.9-4.400z" fill="#543930"/><path d="M3.500 1.300l1.600 1.500-2 .7z" fill="#543930"/><ellipse cx="3.100" cy="13.500" rx=".9" ry="1.400" fill="#e59600"/><ellipse cx="17.400" cy="13.400" rx=".9" ry="1.400" fill="#e59600"/><path d="M3.500 12.300c0-2.500 1-3.700 2.800-4.600 1.500-.8 3.200-1.200 4.900-1.500 1.100 1 2.400 1.500 3.700 2.200 1.500.800 2.200 2 2.200 3.900 0 4.300-3 7.700-6.800 7.700s-6.800-3.200-6.800-7.700z" fill="#fcc51f"/><ellipse cx="6.500" cy="12" rx=".95" ry="1.250" fill="#3b3b48"/><ellipse cx="13.200" cy="12" rx=".95" ry="1.250" fill="#3b3b48"/><path d="M5.500 10.200c.6-.4 1.400-.4 2 0M12.200 10.200c.6-.4 1.400-.4 2 0" stroke="#c98a1a" stroke-width=".6" fill="none"/><path d="M7.600 15.900c1.300.6 3.200.6 4.500 0-.2 1.200-1.100 1.800-2.250 1.800s-2.050-.6-2.250-1.800z" fill="#8a4b3c"/><path d="M9 14.600c.5.400 1.100.4 1.600 0" stroke="#f0a000" stroke-width=".7" fill="none"/></svg>
<span class="t " style="left:422px;top:262px">antigravity</span>
<svg class="e" style="left:682.9px;top:262.7px" width="20" height="21" viewBox="0 0 20 21"><path d="M10 0c3.400 0 5.900 2.800 6 6.800.1 3.300-1.700 6.300-4 7.400l.3.700c3.300.5 5.900 2.100 6.100 4.700H1.600c.2-2.600 2.800-4.200 6.100-4.700l.3-.7c-2.300-1.100-4.100-4.100-4-7.400C4.100 2.800 6.600 0 10 0z" fill="#1976d2"/></svg>
<span class="t " style="left:712px;top:262px">sunels</span>
<svg class="e" style="left:12.9px;top:284.7px" width="20" height="21" viewBox="0 0 20 21"><path d="M15.900.2L2.300 11.400l6.400.600L4 20.200 17.400 8.500l-6-.4z" fill="#fbc21b"/><path d="M15.900.2L2.300 11.400l6.400.600 1.200-2.100 1.500-1.800z" fill="#ffd54a" opacity=".55"/></svg>
<span class="t " style="left:42px;top:284px">36235</span>
<svg class="e" style="left:122.9px;top:284.7px" width="20" height="21" viewBox="0 0 20 21"><g fill="none" stroke="#86bace" stroke-width="2.600"><rect x="-6.100" y="-3.100" width="12.200" height="6.200" rx="3.100" transform="translate(13.200 6.900) rotate(-42)"/><rect x="-6.100" y="-3.100" width="12.200" height="6.200" rx="3.100" transform="translate(6.500 13.600) rotate(-42)"/></g></svg>
<span class="t " style="left:152px;top:284px">TCP</span>
<span class="t " style="left:212px;top:284px">303M/0.7%</span>
<svg class="e" style="left:392.9px;top:284.7px" width="20" height="21" viewBox="0 0 20 21"><path d="M.7 10.500C.3 5.500 3.300 1.800 4.800 2.900 6.500 1.300 9 .6 11.200 .7c5.600.2 8.700 4.300 7.900 9.200.5 2.100.2 3.900-.500 5 .6 1.200-.100 2.500-1.400 2.700H3c-1.300-.2-2-1.500-1.400-2.700-.8-1.100-1.100-2.600-.9-4.400z" fill="#543930"/><path d="M3.500 1.300l1.600 1.500-2 .7z" fill="#543930"/><ellipse cx="3.100" cy="13.500" rx=".9" ry="1.400" fill="#e59600"/><ellipse cx="17.400" cy="13.400" rx=".9" ry="1.400" fill="#e59600"/><path d="M3.500 12.300c0-2.500 1-3.700 2.800-4.600 1.500-.8 3.200-1.200 4.900-1.500 1.100 1 2.400 1.500 3.700 2.200 1.500.800 2.200 2 2.200 3.900 0 4.300-3 7.700-6.800 7.700s-6.800-3.200-6.800-7.700z" fill="#fcc51f"/><ellipse cx="6.500" cy="12" rx=".95" ry="1.250" fill="#3b3b48"/><ellipse cx="13.200" cy="12" rx=".95" ry="1.250" fill="#3b3b48"/><path d="M5.500 10.200c.6-.4 1.400-.4 2 0M12.200 10.200c.6-.4 1.400-.4 2 0" stroke="#c98a1a" stroke-width=".6" fill="none"/><path d="M7.600 15.900c1.300.6 3.200.6 4.500 0-.2 1.200-1.100 1.800-2.250 1.800s-2.050-.6-2.250-1.800z" fill="#8a4b3c"/><path d="M9 14.600c.5.400 1.100.4 1.600 0" stroke="#f0a000" stroke-width=".7" fill="none"/></svg>
<span class="t " style="left:422px;top:284px">language_server</span>
<svg class="e" style="left:12.9px;top:306.7px" width="20" height="21" viewBox="0 0 20 21"><path d="M15.900.2L2.300 11.400l6.400.600L4 20.200 17.400 8.500l-6-.4z" fill="#fbc21b"/><path d="M15.900.2L2.300 11.400l6.400.600 1.200-2.100 1.500-1.800z" fill="#ffd54a" opacity=".55"/></svg>
<span class="t " style="left:42px;top:306px">37797</span>
<svg class="e" style="left:122.9px;top:306.7px" width="20" height="21" viewBox="0 0 20 21"><g fill="none" stroke="#86bace" stroke-width="2.600"><rect x="-6.100" y="-3.100" width="12.200" height="6.200" rx="3.100" transform="translate(13.200 6.900) rotate(-42)"/><rect x="-6.100" y="-3.100" width="12.200" height="6.200" rx="3.100" transform="translate(6.500 13.600) rotate(-42)"/></g></svg>
<span class="t " style="left:152px;top:306px">TCP</span>
<span class="t " style="left:212px;top:306px">69M/0.0%</span>
<svg class="e" style="left:392.9px;top:306.7px" width="20" height="21" viewBox="0 0 20 21"><path d="M.7 10.500C.3 5.500 3.300 1.800 4.800 2.900 6.500 1.300 9 .6 11.200 .7c5.600.2 8.700 4.300 7.900 9.200.5 2.100.2 3.900-.500 5 .6 1.200-.100 2.500-1.400 2.700H3c-1.300-.2-2-1.500-1.400-2.700-.8-1.100-1.100-2.600-.9-4.400z" fill="#543930"/><path d="M3.500 1.300l1.600 1.500-2 .7z" fill="#543930"/><ellipse cx="3.100" cy="13.500" rx=".9" ry="1.400" fill="#e59600"/><ellipse cx="17.400" cy="13.400" rx=".9" ry="1.400" fill="#e59600"/><path d="M3.500 12.300c0-2.500 1-3.700 2.800-4.600 1.500-.8 3.200-1.200 4.900-1.500 1.100 1 2.400 1.500 3.700 2.200 1.500.800 2.200 2 2.200 3.900 0 4.300-3 7.700-6.800 7.700s-6.800-3.200-6.800-7.700z" fill="#fcc51f"/><ellipse cx="6.500" cy="12" rx=".95" ry="1.250" fill="#3b3b48"/><ellipse cx="13.200" cy="12" rx=".95" ry="1.250" fill="#3b3b48"/><path d="M5.500 10.200c.6-.4 1.400-.4 2 0M12.200 10.200c.6-.4 1.400-.4 2 0" stroke="#c98a1a" stroke-width=".6" fill="none"/><path d="M7.600 15.900c1.300.6 3.200.6 4.500 0-.2 1.200-1.100 1.800-2.250 1.800s-2.050-.6-2.250-1.800z" fill="#8a4b3c"/><path d="M9 14.600c.5.400 1.100.4 1.600 0" stroke="#f0a000" stroke-width=".7" fill="none"/></svg>
<span class="t " style="left:422px;top:306px">antigravity</span>
<svg class="e" style="left:12.9px;top:328.7px" width="20" height="21" viewBox="0 0 20 21"><path d="M15.900.2L2.300 11.400l6.400.600L4 20.200 17.400 8.500l-6-.4z" fill="#fbc21b"/><path d="M15.900.2L2.300 11.400l6.400.600 1.200-2.100 1.500-1.800z" fill="#ffd54a" opacity=".55"/></svg>
<span class="t " style="left:42px;top:328px">38311</span>
<svg class="e" style="left:122.9px;top:328.7px" width="20" height="21" viewBox="0 0 20 21"><g fill="none" stroke="#86bace" stroke-width="2.600"><rect x="-6.100" y="-3.100" width="12.200" height="6.200" rx="3.100" transform="translate(13.200 6.900) rotate(-42)"/><rect x="-6.100" y="-3.100" width="12.200" height="6.200" rx="3.100" transform="translate(6.500 13.600) rotate(-42)"/></g></svg>
<span class="t " style="left:152px;top:328px">TCP</span>
<span class="t " style="left:212px;top:328px">303M/0.7%</span>
<svg class="e" style="left:392.9px;top:328.7px" width="20" height="21" viewBox="0 0 20 21"><path d="M.7 10.500C.3 5.500 3.300 1.800 4.800 2.900 6.500 1.300 9 .6 11.200 .7c5.600.2 8.700 4.300 7.900 9.200.5 2.100.2 3.900-.500 5 .6 1.200-.100 2.500-1.400 2.700H3c-1.300-.2-2-1.500-1.400-2.700-.8-1.100-1.100-2.600-.9-4.400z" fill="#543930"/><path d="M3.500 1.300l1.600 1.500-2 .7z" fill="#543930"/><ellipse cx="3.100" cy="13.500" rx=".9" ry="1.400" fill="#e59600"/><ellipse cx="17.400" cy="13.400" rx=".9" ry="1.400" fill="#e59600"/><path d="M3.500 12.300c0-2.500 1-3.700 2.800-4.600 1.500-.8 3.200-1.200 4.900-1.500 1.100 1 2.400 1.500 3.700 2.200 1.500.800 2.200 2 2.200 3.900 0 4.300-3 7.700-6.800 7.700s-6.800-3.200-6.800-7.700z" fill="#fcc51f"/><ellipse cx="6.500" cy="12" rx=".95" ry="1.250" fill="#3b3b48"/><ellipse cx="13.200" cy="12" rx=".95" ry="1.250" fill="#3b3b48"/><path d="M5.500 10.200c.6-.4 1.400-.4 2 0M12.200 10.200c.6-.4 1.400-.4 2 0" stroke="#c98a1a" stroke-width=".6" fill="none"/><path d="M7.600 15.900c1.300.6 3.200.6 4.500 0-.2 1.200-1.100 1.800-2.250 1.800s-2.050-.6-2.250-1.800z" fill="#8a4b3c"/><path d="M9 14.600c.5.400 1.100.4 1.600 0" stroke="#f0a000" stroke-width=".7" fill="none"/></svg>
<span class="t " style="left:422px;top:328px">language_server</span>
<svg class="e" style="left:12.9px;top:350.7px" width="20" height="21" viewBox="0 0 20 21"><path d="M15.900.2L2.300 11.400l6.400.600L4 20.200 17.400 8.500l-6-.4z" fill="#fbc21b"/><path d="M15.900.2L2.300 11.400l6.400.600 1.200-2.100 1.500-1.800z" fill="#ffd54a" opacity=".55"/></svg>
<span class="t " style="left:42px;top:350px">38889</span>
<svg class="e" style="left:122.9px;top:350.7px" width="20" height="21" viewBox="0 0 20 21"><g fill="none" stroke="#86bace" stroke-width="2.600"><rect x="-6.100" y="-3.100" width="12.200" height="6.200" rx="3.100" transform="translate(13.200 6.900) rotate(-42)"/><rect x="-6.100" y="-3.100" width="12.200" height="6.200" rx="3.100" transform="translate(6.500 13.600) rotate(-42)"/></g></svg>
<span class="t " style="left:152px;top:350px">TCP</span>
<span class="t " style="left:212px;top:350px">24M/0.0%</span>
<svg class="e" style="left:392.9px;top:350.7px" width="20" height="21" viewBox="0 0 20 21"><path d="M5.600 2.200c-.4 3.400-1.300 6.300-3 8.500h15c-1.700-2.200-2.600-5.100-3-8.500-.5 3.300-1.900 6.100-4.700 7.300C7.300 8.300 6.100 5.500 5.600 2.200z" fill="#f29a2e"/><circle cx="5.600" cy="2.500" r="1.150" fill="#f9a024"/><circle cx="14.300" cy="2.500" r="1.150" fill="#f9a024"/><path d="M1.300 4.200C1.700 8 3.200 10.400 5.700 11.600 8 10.300 9.300 7.800 9.800 4.600c.5 3.200 1.800 5.700 4.100 7 2.500-1.200 4-3.600 4.500-7.400.6 4-.1 8.800-1 12.700-1.800 1.800-4.600 2.500-7.500 2.500s-5.700-.7-7.500-2.500C1.500 13 .7 8.200 1.300 4.200z" fill="#fcc51f"/><circle cx="1.500" cy="4.100" r="1.250" fill="#ffd638"/><circle cx="18.500" cy="4.100" r="1.250" fill="#ffd638"/><circle cx="9.800" cy="4.800" r="1.300" fill="#ffd638"/><path d="M2.600 16.300c2 1.400 4.600 1.800 7.200 1.800s5.200-.4 7.200-1.800" fill="none" stroke="#fff3a0" stroke-width=".8" opacity=".8"/><ellipse cx="9.800" cy="14" rx="1.700" ry="2" fill="#17a398"/><ellipse cx="5.300" cy="13.800" rx=".85" ry="1.300" fill="#f2453d"/><ellipse cx="14.700" cy="13.800" rx=".85" ry="1.300" fill="#f2453d"/><ellipse cx="2" cy="12.400" rx=".9" ry="1.500" fill="#26b5a0"/><ellipse cx="17.800" cy="12.400" rx=".9" ry="1.500" fill="#26b5a0"/></svg>
<span class="t " style="left:422px;top:350px">containerd</span>
<svg class="e" style="left:12.9px;top:372.7px" width="20" height="21" viewBox="0 0 20 21"><path d="M15.900.2L2.300 11.400l6.400.600L4 20.200 17.400 8.500l-6-.4z" fill="#fbc21b"/><path d="M15.900.2L2.300 11.400l6.400.600 1.200-2.100 1.500-1.800z" fill="#ffd54a" opacity=".55"/></svg>
<span class="t " style="left:42px;top:372px">40801</span>
<svg class="e" style="left:122.9px;top:372.7px" width="20" height="21" viewBox="0 0 20 21"><g fill="none" stroke="#86bace" stroke-width="2.600"><rect x="-6.100" y="-3.100" width="12.200" height="6.200" rx="3.100" transform="translate(13.200 6.900) rotate(-42)"/><rect x="-6.100" y="-3.100" width="12.200" height="6.200" rx="3.100" transform="translate(6.500 13.600) rotate(-42)"/></g></svg>
<span class="t " style="left:152px;top:372px">TCP</span>
<span class="t " style="left:212px;top:372px">303M/0.7%</span>
<svg class="e" style="left:392.9px;top:372.7px" width="20" height="21" viewBox="0 0 20 21"><path d="M.7 10.500C.3 5.500 3.300 1.800 4.800 2.900 6.500 1.300 9 .6 11.200 .7c5.600.2 8.700 4.300 7.900 9.200.5 2.100.2 3.900-.500 5 .6 1.200-.100 2.500-1.400 2.700H3c-1.300-.2-2-1.500-1.400-2.700-.8-1.100-1.100-2.600-.9-4.400z" fill="#543930"/><path d="M3.500 1.300l1.600 1.500-2 .7z" fill="#543930"/><ellipse cx="3.100" cy="13.500" rx=".9" ry="1.400" fill="#e59600"/><ellipse cx="17.400" cy="13.400" rx=".9" ry="1.400" fill="#e59600"/><path d="M3.500 12.300c0-2.500 1-3.700 2.800-4.600 1.500-.8 3.200-1.200 4.900-1.500 1.100 1 2.400 1.500 3.700 2.200 1.500.800 2.200 2 2.200 3.900 0 4.300-3 7.700-6.800 7.700s-6.800-3.200-6.800-7.700z" fill="#fcc51f"/><ellipse cx="6.500" cy="12" rx=".95" ry="1.250" fill="#3b3b48"/><ellipse cx="13.200" cy="12" rx=".95" ry="1.250" fill="#3b3b48"/><path d="M5.500 10.200c.6-.4 1.400-.4 2 0M12.200 10.200c.6-.4 1.400-.4 2 0" stroke="#c98a1a" stroke-width=".6" fill="none"/><path d="M7.600 15.900c1.300.6 3.200.6 4.500 0-.2 1.200-1.100 1.800-2.250 1.800s-2.050-.6-2.250-1.800z" fill="#8a4b3c"/><path d="M9 14.600c.5.400 1.100.4 1.600 0" stroke="#f0a000" stroke-width=".7" fill="none"/></svg>
<span class="t " style="left:422px;top:372px">language_server</span>
<svg class="e" style="left:972.9px;top:20.7px" width="20" height="21" viewBox="0 0 20 21"><path d="M.3 18.100V5.900l1-2.900h4.200l.9 1.500 9.900-1.600v7z" fill="#f3a645"/><path d="M.400 18.200L4.300 11.100l4.800-1.100.4-1.600 10.200-2.300-3.400 8.500z" fill="#fde06b"/></svg>
<span class="t h" style="left:1002px;top:20px">Open Files — PID 1424/vsftpd (4)</span>
<span class="t " style="left:992px;top:64px">1. [0] /dev/null</span>
<span class="t " style="left:992px;top:86px">2. [1] socket:[14181]</span>
<span class="t " style="left:992px;top:108px">3. [2] socket:[14181]</span>
<span class="t " style="left:992px;top:130px">4. [3] socket:[16816]</span>
<svg class="e" style="left:22.9px;top:438.7px" width="20" height="21" viewBox="0 0 20 21"><path d="M5.700 4.600C6 1.600 13.500 1 13.500 5.400c0 3.100-4 4.100-4 7.700" fill="none" stroke="#f5443a" stroke-width="2.900" stroke-linecap="round"/><circle cx="9.500" cy="17.500" r="2.050" fill="#f5443a"/></svg>
<span class="t h" style="left:52px;top:438px">Why It Exists — 19 lines</span>
<svg class="e" style="left:22.9px;top:482.7px" width="20" height="21" viewBox="0 0 20 21"><circle cx="10.100" cy="10.300" r="9" fill="#fb1e1e"/><circle cx="10.100" cy="10.300" r="7" fill="#fff"/><circle cx="10.100" cy="10.300" r="5.100" fill="#fb1e1e"/><circle cx="10.100" cy="10.300" r="3.300" fill="#fff"/><circle cx="10.100" cy="10.300" r="1.900" fill="#f01818"/><path d="M16.500 14.500a9 9 0 0 1-4 4.400l-1-1.800a7 7 0 0 0 3.200-3.500z" fill="#d01f3c" opacity=".7"/><path d="M10.300 10.100l5.200-2.700" stroke="#7f97ad" stroke-width="1.100"/><path d="M13.200 8.600l2.300-1.200" stroke="#1a73d0" stroke-width="1.300"/><path d="M15 7.800l1.500-3.400 2.300-.4.900 1.900-1 2.300-3.400 .6z" fill="#1a73d0"/></svg>
<span class="t " style="left:52px;top:482px">Target      : vsftpd</span>
<svg class="e" style="left:22.9px;top:504.7px" width="20" height="21" viewBox="0 0 20 21"><path d="M.4 9.600C.3 5.600 4.500 1.700 10.600 1.700c5.200 0 8.400 3.300 8.900 7.500.4 2.900-.6 4.600-2 5.600.2 1.500-1.600 2.500-3.600 2.500-1.800 0-3-.9-3.400-2.300-1.600.3-4.600.4-5.900-.5C2.400 14 .5 12.300.4 9.600z" fill="#f6acb0"/><path d="M10.700 14.600c1.800.4 4.900.5 6.800-.1.200 1.600-1.500 2.800-3.500 2.800-1.900 0-3.100-1.200-3.300-2.700z" fill="#e0686c"/><g fill="none" stroke="#ec8a90" stroke-width=".8"><path d="M2.500 7.500c1.500-1.500 2.500.5 4-.8s1.500-2.700 3.500-2.500M4.500 11.500c1-1.800 3-.5 4.200-2.200s3-1 4.300-2.700M7.500 13.800c1.500-1 2.800.3 4.200-1.200s2.700-.5 4.300-2M12 3.800c1 1.200 2.700.5 3.700 2.200M1.800 10.300c1 .3 1.700 1.500 2.700 1.200M14.500 8.500c1 .5 2 .2 3 1.200M6 5c.5-1 1.500-1.500 2.500-1.500"/></g><g fill="none" stroke="#fcd0d2" stroke-width=".8" opacity=".9"><path d="M3.500 5.800c1-1 2-1.300 3-1.300M9.500 6.500c1-.5 2-.5 3 .2M5.500 9.300c.8-.6 1.800-.8 2.600-.3M13 11c1-.6 2-.6 3-.2M3 12.300c.8.500 1.600.6 2.400.4M9 12c.8-.5 1.600-.5 2.400-.2M15.500 5.500c.8.600 1.300 1.400 1.600 2.300"/></g></svg>
<span class="t " style="left:52px;top:504px">Process     : vsftpd (pid 1424)</span>
<svg class="e" style="left:22.9px;top:526.7px" width="20" height="21" viewBox="0 0 20 21"><path d="M10 0c3.400 0 5.900 2.800 6 6.800.1 3.300-1.700 6.300-4 7.400l.3.700c3.300.5 5.900 2.100 6.100 4.700H1.600c.2-2.600 2.800-4.200 6.100-4.700l.3-.7c-2.300-1.100-4.100-4.100-4-7.400C4.100 2.800 6.600 0 10 0z" fill="#1976d2"/></svg>
<span class="t " style="left:52px;top:526px">User        : root</span>
<svg class="e" style="left:22.9px;top:548.7px" width="20" height="21" viewBox="0 0 20 21"><path d="M.4 9.600C.3 5.600 4.500 1.700 10.600 1.700c5.200 0 8.400 3.300 8.900 7.500.4 2.900-.6 4.600-2 5.600.2 1.500-1.600 2.500-3.600 2.500-1.800 0-3-.9-3.400-2.300-1.600.3-4.600.4-5.900-.5C2.400 14 .5 12.300.4 9.600z" fill="#f6acb0"/><path d="M10.700 14.600c1.800.4 4.900.5 6.800-.1.200 1.600-1.500 2.800-3.500 2.800-1.900 0-3.100-1.200-3.300-2.700z" fill="#e0686c"/><g fill="none" stroke="#ec8a90" stroke-width=".8"><path d="M2.500 7.500c1.500-1.500 2.500.5 4-.8s1.500-2.700 3.500-2.500M4.500 11.500c1-1.800 3-.5 4.200-2.200s3-1 4.300-2.700M7.500 13.800c1.500-1 2.800.3 4.200-1.200s2.700-.5 4.300-2M12 3.800c1 1.200 2.700.5 3.700 2.200M1.800 10.300c1 .3 1.700 1.500 2.700 1.200M14.500 8.500c1 .5 2 .2 3 1.200M6 5c.5-1 1.500-1.500 2.500-1.500"/></g><g fill="none" stroke="#fcd0d2" stroke-width=".8" opacity=".9"><path d="M3.500 5.800c1-1 2-1.300 3-1.300M9.500 6.500c1-.5 2-.5 3 .2M5.500 9.300c.8-.6 1.800-.8 2.600-.3M13 11c1-.6 2-.6 3-.2M3 12.300c.8.500 1.600.6 2.400.4M9 12c.8-.5 1.600-.5 2.400-.2M15.500 5.500c.8.600 1.300 1.400 1.600 2.300"/></g></svg>
<span class="t " style="left:52px;top:548px">Command     : /usr/sbin/vsftpd /etc/vsftpd.conf</span>
<svg class="e" style="left:22.9px;top:570.7px" width="20" height="21" viewBox="0 0 20 21"><rect x="8.300" y=".4" width="3.200" height="4" rx=".9" fill="#90a4ae"/><ellipse cx="9.700" cy="1.700" rx="1.700" ry=".9" fill="#e8eef1"/><rect x="-1.300" y="-1.100" width="2.600" height="2.200" rx=".4" transform="translate(17.100 5) rotate(45)" fill="#cfd8dc"/><circle cx="10" cy="11.900" r="8.400" fill="#b4c4cc"/><circle cx="10" cy="11.900" r="7.100" fill="#fcfcfc"/><g stroke="#e8b590" stroke-width=".8"><path d="M10 6v1.200M10 16.600v1.200M4.100 11.900h1.200M14.700 11.900h1.200M7 6.800l.5.900M13 6.800l-.5.900M4.900 8.900l.9.500M15.100 8.900l-.9.500M4.900 14.900l.9-.500M15.100 14.900l-.9-.500M7 17l.5-.9M13 17l-.5-.9"/></g><path d="M9.700 5.800l.7 6.300H9.100z" fill="#6d4036"/><circle cx="9.750" cy="12" r=".9" fill="#6d4036"/></svg>
<span class="t " style="left:52px;top:570px">Started     : 6 days ago (Fri 2026-02-06 21:52:10 +02:00)</span>
<span class="t " style="left:22px;top:592px">Why It Exists :</span>
<span class="t " style="left:42px;top:614px">systemd (pid 1)</span>
<span class="t " style="left:222px;top:614px">vsftpd (pid 1424)</span>
<svg class="e" style="left:202px;top:614px" width="12" height="22" viewBox="0 0 12 22"><path d="M.7 11.300h12M10 8.500l3.100 2.800-3.100 2.800" fill="none" stroke="#e6c19c" stroke-width="1.300"/></svg>
<svg class="e" style="left:22.9px;top:636.7px" width="20" height="21" viewBox="0 0 20 21"><path d="M9.800.5L18.800 5.600 10.100 9.800 1 5.600z" fill="#dca664"/><path d="M1 5.600l9.100 4.200v10.700L1 15.800z" fill="#c5915a"/><path d="M10.100 9.800l8.700-4.200v10.200l-8.700 4.700z" fill="#a16a3c"/><path d="M4.900 3.600l2.300-1.400 8.700 4.900-2.300 1.100z" fill="#f7ddb4"/><path d="M13.100 8.400l2.800-1.300v3.200l-2.600 1.200z" fill="#d4b494"/><path d="M2.300 13.200l3.300 1.600v2.400l-3.300-1.600z" fill="#b07f4c" opacity=".7"/></svg>
<span class="t " style="left:52px;top:636px">Source      : systemd service (supervisor)</span>
<svg class="e" style="left:22.9px;top:658.7px" width="20" height="21" viewBox="0 0 20 21"><path d="M13.900 2.300l.7-1.900h3.400l.7 1.900z" fill="#7cb342"/><rect x="1" y="2.300" width="17.900" height="3.200" fill="#f3a645"/><path d="M7.200 5.200l.8-2h3.600l.8 2z" fill="#0590e3"/><rect x="1" y="5.300" width="17.900" height="2" fill="#fcc21b"/><rect x="1.200" y="6" width="4.900" height="1.300" rx=".5" fill="#f4432f"/><rect x="1" y="7.200" width="17.900" height="13" fill="#fee068"/><rect x="1" y="19.300" width="17.900" height=".9" fill="#d4b24c"/></svg>
<span class="t " style="left:52px;top:658px">Working Dir : /</span>
<svg class="e" style="left:22.9px;top:680.7px" width="20" height="21" viewBox="0 0 20 21"><path d="M10.100 1.300c3.800 0 6.400 2.900 6.100 6.900-.2 3-2 4.500-3.600 6.200-1.600 1.700-2.200 5.100-5.200 5.100-2.300 0-3.300-1.900-3.100-4.600.1-2.600-.3-4.300-.1-7.300.3-3.800 2.500-6.300 5.900-6.300z" fill="#fcc21b"/><path d="M10.500 3.300c2.500 0 4.200 2.100 3.900 4.800-.2 2.200-1.600 3.300-2.800 4.700-1 1.200-1.600 3.300-3.300 3.300-1.400 0-2-1.300-1.800-3 .2-2.100-.3-3.400-.100-5.500.200-2.700 1.800-4.300 4.100-4.300z" fill="#f7a400"/><path d="M7.700 7.500c1.800 1.300 3.800 3.400 4.500 5.600" fill="none" stroke="#d78008" stroke-width=".9"/><path d="M6.600 13.500c.6-1.300 1-2.400.9-3.700" fill="none" stroke="#d78008" stroke-width="1.600"/><path d="M11.200 6.800c1 .3 1.600 1.300 1.600 2.300" stroke="#ffcf3a" stroke-width="1.500" fill="none"/></svg>
<span class="t " style="left:52px;top:680px">Listening   : :::21</span>
<svg class="e" style="left:22.9px;top:702.7px" width="20" height="21" viewBox="0 0 20 21"><g transform="translate(8.300 8.900) rotate(45)"><rect x="-8.300" y="-4.300" width="7.400" height="2" rx="1" fill="#dcdcdc"/><rect x="-8.300" y="2.300" width="7.400" height="2" rx="1" fill="#dcdcdc"/><rect x="-1.500" y="-5.900" width="2.600" height="11.800" rx=".8" fill="#6c6c6c"/><path d="M1.100 -4.600C4.600 -4.300 7.200 -2.600 7.600 -2V2C7.200 2.600 4.600 4.300 1.100 4.600z" fill="#6a6a6a"/><path d="M1.100 -4.600v9.200" stroke="#4c4c4c" stroke-width=".7"/><path d="M7.300 -2.200h1.200v4.400h-1.200z" fill="#7d7d7d"/><path d="M8.400 -1.800l5.400 .5v2.600l-5.400 .5z" fill="#5e5e5e"/></g></svg>
<span class="t " style="left:52px;top:702px">Socket      : LISTEN</span>
<span class="t " style="left:162px;top:724px">Actively listening for connections</span>
<svg class="e" style="left:22.9px;top:746.7px" width="20" height="21" viewBox="0 0 20 21"><path d="M10 .3c.5 0 .9.300 1.200.800l8.500 16.800c.5 1-.1 1.900-1.100 1.900H1.400c-1 0-1.600-.9-1.100-1.900L8.800 1.100c.3-.5.700-.8 1.200-.8z" fill="#fcc21b"/><path d="M8.900 6.300c0-.6.500-.9 1.100-.9s1.100.3 1.100.9l-.4 8.100c0 .5-.3.800-.7.800s-.7-.3-.7-.8z" fill="#2f2f3b"/><ellipse cx="10" cy="16.800" rx="1.100" ry="1" fill="#2f2f3b"/><path d="M7.500 4.500L3 13.500" stroke="#ffe36a" stroke-width="1.100" opacity=".6" stroke-linecap="round"/></svg>
<span class="t " style="left:52px;top:746px">Warnings    :</span>
<span class="t " style="left:42px;top:768px">•</span>
<svg class="e" style="left:62.9px;top:768.7px" width="20" height="21" viewBox="0 0 20 21"><path d="M.4 9.600C.3 5.600 4.500 1.700 10.600 1.700c5.200 0 8.400 3.300 8.900 7.500.4 2.900-.6 4.600-2 5.600.2 1.500-1.600 2.500-3.600 2.500-1.800 0-3-.9-3.400-2.300-1.600.3-4.600.4-5.900-.5C2.400 14 .5 12.300.4 9.600z" fill="#f6acb0"/><path d="M10.700 14.600c1.800.4 4.900.5 6.800-.1.200 1.600-1.500 2.800-3.500 2.800-1.900 0-3.100-1.200-3.300-2.700z" fill="#e0686c"/><g fill="none" stroke="#ec8a90" stroke-width=".8"><path d="M2.500 7.500c1.500-1.500 2.500.5 4-.8s1.500-2.700 3.500-2.500M4.500 11.500c1-1.800 3-.5 4.200-2.200s3-1 4.300-2.700M7.500 13.800c1.500-1 2.800.3 4.200-1.200s2.700-.5 4.300-2M12 3.800c1 1.200 2.700.5 3.700 2.200M1.800 10.300c1 .3 1.700 1.500 2.700 1.200M14.500 8.500c1 .5 2 .2 3 1.200M6 5c.5-1 1.500-1.500 2.500-1.500"/></g><g fill="none" stroke="#fcd0d2" stroke-width=".8" opacity=".9"><path d="M3.500 5.800c1-1 2-1.300 3-1.300M9.500 6.500c1-.5 2-.5 3 .2M5.500 9.300c.8-.6 1.800-.8 2.600-.3M13 11c1-.6 2-.6 3-.2M3 12.300c.8.500 1.600.6 2.400.4M9 12c.8-.5 1.600-.5 2.400-.2M15.500 5.500c.8.600 1.300 1.400 1.600 2.300"/></g></svg>
<span class="t " style="left:92px;top:768px">Process is listening on a public interface</span>
<span class="t " style="left:42px;top:790px">•</span>
<svg class="e" style="left:62.9px;top:790.7px" width="20" height="21" viewBox="0 0 20 21"><path d="M.4 9.600C.3 5.600 4.500 1.700 10.600 1.700c5.200 0 8.400 3.300 8.900 7.500.4 2.900-.6 4.600-2 5.600.2 1.500-1.600 2.500-3.600 2.500-1.800 0-3-.9-3.400-2.300-1.600.3-4.600.4-5.900-.5C2.400 14 .5 12.300.4 9.600z" fill="#f6acb0"/><path d="M10.700 14.600c1.800.4 4.900.5 6.800-.1.200 1.600-1.500 2.800-3.500 2.800-1.900 0-3.100-1.200-3.300-2.700z" fill="#e0686c"/><g fill="none" stroke="#ec8a90" stroke-width=".8"><path d="M2.500 7.500c1.500-1.500 2.500.5 4-.8s1.500-2.700 3.500-2.500M4.500 11.500c1-1.800 3-.5 4.200-2.200s3-1 4.300-2.700M7.500 13.800c1.500-1 2.800.3 4.200-1.200s2.700-.5 4.300-2M12 3.800c1 1.200 2.700.5 3.700 2.200M1.800 10.300c1 .3 1.700 1.500 2.700 1.200M14.500 8.500c1 .5 2 .2 3 1.200M6 5c.5-1 1.500-1.500 2.500-1.500"/></g><g fill="none" stroke="#fcd0d2" stroke-width=".8" opacity=".9"><path d="M3.500 5.800c1-1 2-1.300 3-1.300M9.500 6.500c1-.5 2-.5 3 .2M5.500 9.300c.8-.6 1.800-.8 2.600-.3M13 11c1-.6 2-.6 3-.2M3 12.300c.8.500 1.600.6 2.400.4M9 12c.8-.5 1.600-.5 2.400-.2M15.500 5.500c.8.600 1.300 1.400 1.600 2.300"/></g></svg>
<span class="t " style="left:92px;top:790px">Process is running as root</span>
<div class="b" style="left:942px;top:632px;width:320px;height:1px;background:#ffd7af;"></div>
<svg class="e" style="left:942.9px;top:614.7px" width="20" height="21" viewBox="0 0 20 21"><path d="M8.100.2c3.200.4 5.700 2.300 5.900 5.300.1 1.500-.3 2.700.2 3.900.6-.2 1.300-.4 1.700-.9 1.200 1.300 1.700 3 1.500 4.600-.4 3.800-3.400 6.400-7.400 6.400-4.300 0-7.500-2.700-7.700-6.500-.2-2.900.700-5.200 2.300-7.200.400 1.300.600 2.200 1.200 3C6.500 7 9.700 4.800 9 3.200 8.800 2.200 8.500 1 8.100.2z" fill="url(#gfire)"/><path d="M10.700 7.100c.300 2 2.300 3.500 3 5.500.8 2.300.2 4.500-1.300 5.600-1.400 1-3.600 1.100-5-.1-1.500-1.200-1.900-3.100-1.200-4.900.4-.9 1-1.400 1.500-2 .1 1 .3 1.500 1 2 .1-2.400 1.400-4.200 2-6.100z" fill="#fff08a"/><path d="M10 12.500c1 1.300 2.200 2.300 2.200 4 0 1.400-1 2.400-2.300 2.400s-2.400-1-2.400-2.400c0-1.300 1.500-2.300 2.500-4z" fill="#fff9c4" opacity=".8"/></svg>
<span class="t bt" style="left:972px;top:614px">Process Reality Check (DEBUG)</span>
<svg class="e" style="left:942.9px;top:636.7px" width="20" height="21" viewBox="0 0 20 21"><path d="M8.100 20c.4-2.500.5-4.500.2-6.500l-2.300-2.300.8-.5 2.200 1.600.4-1.800h1.200l.2 2.300 1.800-.900.500.600-2 1.800c-.1 1.800.1 3.700.8 5.700-1.200.5-2.600.5-3.800 0z" fill="#8d5a4b"/><circle cx="9.600" cy="10.500" r="5.800" fill="#5f9f22"/><circle cx="5.200" cy="10.400" r="4" fill="#6dad26"/><circle cx="14.600" cy="10.600" r="4" fill="#5f9f22"/><circle cx="4.900" cy="8.400" r="3.900" fill="#86c22a"/><circle cx="15.100" cy="8.300" r="3.600" fill="#80bd2a"/><circle cx="10.100" cy="5.300" r="5.200" fill="#8bc42b"/><path d="M5.200 9.500c2 2 5.500 2.300 8 .8" stroke="#5f9f22" stroke-width="1" fill="none"/><path d="M9 20c.3-2.700.4-4.500.2-6.500l-1.600-1.800M10.300 11.200v2.500" stroke="#8d5a4b" stroke-width="1.100" fill="none"/><path d="M8.700 14.500h2.700l.5 5.300c-1.200.5-2.500.5-3.700 0z" fill="#8d5a4b"/></svg>
<span class="t " style="left:972px;top:636px">Process Tree:</span>
<span class="t " style="left:942px;top:658px">systemd(1)</span>
<span class="t " style="left:1002px;top:680px">vsftpd(1424)</span>
<div class="b" style="left:976px;top:680px;width:2px;height:12px;background:#ffd7af;"></div>
<div class="b" style="left:976px;top:690px;width:16px;height:2px;background:#ffd7af;"></div>
<div class="b" style="left:942px;top:742px;width:260px;height:1px;background:#ffd7af;"></div>
<svg class="e" style="left:942.9px;top:724.7px" width="20" height="21" viewBox="0 0 20 21"><path d="M8.100.2c3.200.4 5.700 2.300 5.900 5.300.1 1.500-.3 2.700.2 3.900.6-.2 1.300-.4 1.700-.9 1.200 1.300 1.700 3 1.500 4.600-.4 3.800-3.400 6.400-7.400 6.400-4.300 0-7.500-2.700-7.700-6.500-.2-2.900.700-5.200 2.300-7.200.400 1.300.600 2.200 1.200 3C6.500 7 9.700 4.800 9 3.200 8.800 2.200 8.500 1 8.100.2z" fill="url(#gfire)"/><path d="M10.700 7.100c.300 2 2.300 3.500 3 5.500.8 2.300.2 4.500-1.300 5.600-1.400 1-3.600 1.100-5-.1-1.500-1.200-1.900-3.100-1.200-4.900.4-.9 1-1.400 1.500-2 .1 1 .3 1.500 1 2 .1-2.400 1.400-4.200 2-6.100z" fill="#fff08a"/><path d="M10 12.500c1 1.300 2.200 2.300 2.200 4 0 1.400-1 2.400-2.300 2.400s-2.400-1-2.400-2.400c0-1.300 1.500-2.300 2.500-4z" fill="#fff9c4" opacity=".8"/></svg>
<span class="t bt" style="left:972px;top:724px">RESOURCE PRESSURE (OPS)</span>
<svg class="e" style="left:942.9px;top:746.7px" width="20" height="21" viewBox="0 0 20 21"><path d="M8.100.2c3.200.4 5.700 2.300 5.900 5.300.1 1.500-.3 2.700.2 3.900.6-.2 1.300-.4 1.700-.9 1.200 1.300 1.700 3 1.500 4.600-.4 3.800-3.400 6.400-7.400 6.400-4.300 0-7.500-2.700-7.700-6.500-.2-2.900.700-5.200 2.300-7.200.400 1.300.600 2.200 1.200 3C6.500 7 9.700 4.800 9 3.200 8.800 2.200 8.500 1 8.100.2z" fill="url(#gfire)"/><path d="M10.700 7.100c.300 2 2.300 3.500 3 5.500.8 2.300.2 4.500-1.300 5.600-1.400 1-3.600 1.100-5-.1-1.500-1.200-1.900-3.100-1.200-4.900.4-.9 1-1.400 1.500-2 .1 1 .3 1.500 1 2 .1-2.400 1.400-4.200 2-6.100z" fill="#fff08a"/><path d="M10 12.500c1 1.300 2.200 2.300 2.200 4 0 1.400-1 2.400-2.300 2.400s-2.400-1-2.400-2.400c0-1.300 1.500-2.300 2.500-4z" fill="#fff9c4" opacity=".8"/></svg>
<span class="t " style="left:972px;top:746px">4. File Descriptor Pressure</span>
<svg class="e" style="left:942.9px;top:768.7px" width="20" height="21" viewBox="0 0 20 21"><path d="M.3 18.100V5.900l1-2.900h4.200l.9 1.500 9.900-1.600v7z" fill="#f3a645"/><path d="M.400 18.200L4.300 11.100l4.800-1.100.4-1.600 10.200-2.300-3.400 8.500z" fill="#fde06b"/></svg>
<span class="t " style="left:972px;top:768px">File Descriptors :</span>
<span class="t " style="left:962px;top:790px">Open : 4</span>
<span class="t h" style="left:152px;top:856px">[</span>
<svg class="e" style="left:162.9px;top:856.7px" width="20" height="21" viewBox="0 0 20 21"><rect x=".2" y=".4" width="19.200" height="19.700" rx="1.300" fill="#8bb0c2"/><path d="M.2 18.800h19.200v.2c0 .6-.6 1.100-1.300 1.100H1.500c-.7 0-1.300-.5-1.300-1.100z" fill="#5a8ba0"/><path d="M2.300 6.500L6.900 2.300v3.100h6.500c2.300 0 3.600 2.300 3.300 5.700h-2.100c-.1-2.200-.8-3.700-2-3.700H6.900v3.200z" fill="#fcfcfc"/><path d="M17.100 13.700l-5 4.400v-3.200H6.300c-2.300 0-3.900-2.300-3.800-5.500h2.100c.1 2 .9 3.200 2.100 3.200h5.400V9.400z" fill="#fcfcfc"/></svg>
<span class="t h" style="left:192px;top:856px">'r' Refresh]</span>
<span class="t h" style="left:332px;top:856px">[</span>
<svg class="e" style="left:342.9px;top:856.7px" width="20" height="21" viewBox="0 0 20 21"><path d="M7.200.6c5-.6 10.400 2.700 12 7.800.9 3-.4 5.300-2.500 5.500-1.500.2-2.700-.500-4-.800-1-.2-1.300.5-.7 1.300l2.500 1.700c1.100 1.200.4 2.300-1.300 2.600-4.300.8-9.700-2.100-12-7.100C-1.200 6.300 2 1.200 7.200.6z" fill="#ef9f4e"/><circle cx="5.100" cy="4.600" r="1.850" fill="#e6302b"/><circle cx="4.600" cy="4" r=".7" fill="#ff8a80"/><circle cx="10.300" cy="3.600" r="1.650" fill="#fbdc34"/><circle cx="9.900" cy="3.100" r=".7" fill="#fff9c4"/><ellipse cx="14.800" cy="6.700" rx="1.600" ry="1.500" fill="#66a832"/><circle cx="14.300" cy="6.100" r=".6" fill="#a5d66a"/><ellipse cx="5.100" cy="9.800" rx="1.900" ry="1.700" fill="#176fcf"/><circle cx="4.500" cy="9.100" r=".7" fill="#7cb8f5"/><ellipse cx="9" cy="13.900" rx="1.900" ry="1.700" transform="rotate(30 9 13.900)" fill="#e6eef5"/><ellipse cx="13" cy="9.700" rx="1.200" ry="1.450" transform="rotate(-25 13 9.700)" fill="#262626"/></svg>
<span class="t h" style="left:372px;top:856px">Colorize c]</span>
<span class="t h" style="left:502px;top:856px">[</span>
<svg class="e" style="left:512.9px;top:856.7px" width="20" height="21" viewBox="0 0 20 21"><circle cx="17.500" cy="1.900" r="1.500" fill="none" stroke="#f0b400" stroke-width="1.100"/><circle cx="9.500" cy="9.800" r="8.500" fill="#fff" stroke="#fcc21b" stroke-width="2"/><g stroke="#e9c7a6" stroke-width=".7"><path d="M9.500 2.600v2.200M9.500 14.800v2.200M2.300 9.800h2.200M14.500 9.800h2.200"/></g><path d="M6 6.800l7.200 6" stroke="#a58268" stroke-width="1.200" opacity=".75"/><path d="M9.500 5.200v9.200M4.900 9.800h9.200" stroke="#e3c4a4" stroke-width=".8"/><path d="M14.600 4.500L11 10.400 8.900 8.400z" fill="#f04131"/><path d="M5 14.100l3.300-5.600 2.300 2.100z" fill="#1f8a9e"/><path d="M8.500 8.800l1.500 1.400-1.600 1.500-.9-.8z" fill="#7ed6ea"/></svg>
<span class="t h" style="left:552px;top:856px">/</span>
<span class="t h" style="left:582px;top:856px">Select]</span>
<svg class="e" style="left:542px;top:856px" width="30" height="22" viewBox="0 0 30 22"><g fill="none" stroke="#ffaf00" stroke-width="2.100"><path d="M4.250 4.800v12.400M1.300 8.600l2.950-3.500 2.950 3.500"/><path d="M24.250 4v12.400M21.300 12.600l2.950 3.500 2.950-3.500"/></g></svg>
<span class="t h" style="left:662px;top:856px">[</span>
<svg class="e" style="left:673.2px;top:856.7px" width="20" height="21" viewBox="0 0 20 21"><rect x=".2" y=".4" width="19.100" height="19.300" rx="1.300" fill="#8bb0c2"/><path d="M.2 18.500h19.100v.1c0 .6-.6 1.100-1.300 1.100H1.500c-.7 0-1.300-.5-1.300-1.100z" fill="#5a8ba0"/><path d="M9.700 2.200l4.500 4.900h-2.900v4.300h2.900l-4.500 5.100-4.500-5.100h2.900V7.100H5.200z" fill="#fcfcfc"/></svg>
<span class="t h" style="left:692px;top:856px">+/- Resize]</span>
<span class="t h" style="left:812px;top:856px">[</span>
<svg class="e" style="left:822px;top:856px" width="28" height="22" viewBox="0 0 28 22"><g fill="none" stroke="#ffaf00" stroke-width="2.100"><path d="M3 17V4.900h10.500l8.300 7.500M25 3.800V16H13.500L5.500 8"/></g><path d="M4.300 6.400l5.300 1-4 4z" fill="#ffaf00"/><path d="M23.300 14.800l-6-.7 5.200-4.400z" fill="#ffaf00"/></svg>
<span class="t h" style="left:852px;top:856px">Tab Witr Pane]</span>
<span class="t h" style="left:1012px;top:856px">[</span>
<svg class="e" style="left:1022.9px;top:856.7px" width="20" height="21" viewBox="0 0 20 21"><path d="M.3 18.100V5.900l1-2.900h4.200l.9 1.500 9.900-1.600v7z" fill="#f3a645"/><path d="M.400 18.200L4.300 11.100l4.800-1.100.4-1.600 10.200-2.300-3.400 8.500z" fill="#fde06b"/></svg>
<span class="t h" style="left:1062px;top:856px">/</span>
<span class="t h" style="left:1092px;top:856px">Files Scroll]</span>
<svg class="e" style="left:1052px;top:856px" width="36" height="22" viewBox="0 0 36 22"><g fill="#ffaf00"><rect x="3" y="9.700" width="11.400" height="2.300"/><path d="M.6 10.850l5.300-3.500-1.200 3.500 1.200 3.500z"/><rect x="20.900" y="9.700" width="11" height="2.300"/><path d="M34.400 10.850l-5.300-3.500 1.200 3.500-1.200 3.500z"/></g></svg>
<span class="t h" style="left:1232px;top:856px">[</span>
<svg class="e" style="left:1242.9px;top:856.7px" width="20" height="21" viewBox="0 0 20 21"><circle cx="9.800" cy="9.700" r="9.600" fill="#f44336"/><rect x="3" y="8.400" width="14.100" height="2.800" fill="#fbfbfb"/><path d="M3.200 6.500c.7-2.300 2.400-3.900 4.800-4.600" stroke="#ff8a80" stroke-width="1" fill="none" stroke-linecap="round" opacity=".8"/></svg>
<span class="t h" style="left:1272px;top:856px">s Stop Proc]</span>
<span class="t h" style="left:1402px;top:856px">[</span>
<svg class="e" style="left:1412.9px;top:856.7px" width="20" height="21" viewBox="0 0 20 21"><path d="M8.100.2c3.200.4 5.700 2.300 5.900 5.300.1 1.500-.3 2.700.2 3.900.6-.2 1.300-.4 1.700-.9 1.200 1.300 1.700 3 1.500 4.600-.4 3.800-3.400 6.400-7.400 6.400-4.300 0-7.500-2.700-7.700-6.500-.2-2.900.700-5.200 2.300-7.200.400 1.300.600 2.200 1.200 3C6.500 7 9.700 4.800 9 3.200 8.800 2.200 8.500 1 8.100.2z" fill="url(#gfire)"/><path d="M10.700 7.100c.300 2 2.300 3.500 3 5.500.8 2.300.2 4.500-1.300 5.600-1.400 1-3.600 1.100-5-.1-1.500-1.200-1.900-3.100-1.200-4.900.4-.9 1-1.400 1.500-2 .1 1 .3 1.500 1 2 .1-2.400 1.400-4.200 2-6.100z" fill="#fff08a"/><path d="M10 12.500c1 1.300 2.200 2.300 2.200 4 0 1.400-1 2.400-2.300 2.400s-2.400-1-2.400-2.400c0-1.300 1.500-2.300 2.500-4z" fill="#fff9c4" opacity=".8"/></svg>
<span class="t h" style="left:1442px;top:856px">f Firewall]</span>
<span class="t h" style="left:1572px;top:856px">[</span>
<svg class="e" style="left:1582.9px;top:856.7px" width="20" height="21" viewBox="0 0 20 21"><path d="M12.300 6.400l2.300 2.300L5 18.400c-1 1-2.400 1-3.300.1s-.9-2.300.1-3.300z" fill="#8fbfd1"/><path d="M17.600.5c-2.300-.9-5-.200-6.100 1.800-1 1.900-.6 4.200 1 5.600 1.700 1.400 4.200 1.500 6 .1.900-.7 1.400-1.600 1.600-2.600l-3.500.400c-.9 0-1.600-.6-1.700-1.400-.1-.8.300-1.500 1.100-1.900z" fill="#8fbfd1"/><circle cx="3.400" cy="16.700" r=".9" fill="#262626"/><path d="M7.400 7.300l2.200-1.700 9.500 11c.6.800.5 1.700-.2 2.300-.7.600-1.700.500-2.300-.3z" fill="#b3703f"/><path d="M.2 6.900c2.200-3.500 5.700-6 10.700-6.500-2 1.200-2.700 2.400-2.300 3.800l1.300 1.300-2.600 2.300-1.200-1.200-2.300 2.500z" fill="#8fbfd1"/><path d="M3.500 5.300l2.200 2.500" stroke="#5f9db3" stroke-width=".8"/></svg>
<span class="t h" style="left:1602px;top:856px">a Actions]</span>
<span class="t h" style="left:1712px;top:856px">[</span>
<svg class="e" style="left:1722.9px;top:856.7px" width="20" height="21" viewBox="0 0 20 21"><path d="M2.100 2.100l15.500 15.500M17.600 2.100L2.100 17.600" stroke="#f5453a" stroke-width="3.700" stroke-linecap="round"/></svg>
<span class="t h" style="left:1752px;top:856px">q Quit]</span>
<div class="b" style="left:632px;top:284px;width:640px;height:308px;background:#262626;"></div>
<div class="b" style="left:636px;top:294px;width:632px;height:2px;background:#ffdcb0;"></div>
<div class="b" style="left:636px;top:580px;width:632px;height:2px;background:#ffdcb0;"></div>
<div class="b" style="left:636px;top:294px;width:2px;height:288px;background:#ffdcb0;"></div>
<div class="b" style="left:1266px;top:294px;width:2px;height:288px;background:#ffdcb0;"></div>
<div class="b" style="left:862px;top:290px;width:180px;height:10px;background:#262626;"></div>
<svg class="e" style="left:872.9px;top:284.7px" width="20" height="21" viewBox="0 0 20 21"><path d="M7.900 9.200l2-2 8.400 7.500c1.200 1.200 1.400 2.900.3 4-1.100 1.100-2.900.9-4-.3z" fill="#8fbfd1"/><path d="M2.900.5c2.700-.9 5.500.300 6.300 2.900.700 2.400-.6 4.800-2.900 5.600-2.500.8-5-.4-5.900-2.700l3.700-.8c1-.3 1.400-1.100 1.200-2-.2-.9-.9-1.500-1.800-1.500z" fill="#8fbfd1"/><path d="M8.800 2.200c.9 2.200.2 4.700-2 5.900" stroke="#5f9db3" stroke-width=".9" fill="none"/><circle cx="16.500" cy="16.600" r=".95" fill="#262626"/><path d="M10.500 8.700l6.300 5.900" stroke="#b5dbe8" stroke-width="1" opacity=".8"/></svg>
<span class="t h" style="left:902px;top:284px">Action Center</span>
<svg class="e" style="left:662.9px;top:328.7px" width="20" height="21" viewBox="0 0 20 21"><g fill="none" stroke="#0ba6f3" stroke-width="1.45"><circle cx="9.9" cy="9.8" r="9"/><ellipse cx="9.9" cy="9.8" rx="5.2" ry="9"/><path d="M9.9 .8v18M.9 9.8h18M2.6 5.1h14.6M2.6 14.4h14.6"/></g></svg>
<span class="t " style="left:692px;top:328px">PORT OPERATIONS</span>
<svg class="e" style="left:682.9px;top:350.7px" width="20" height="21" viewBox="0 0 20 21"><circle cx="10" cy="10.600" r="8.600" fill="none" stroke="#e53b3b" stroke-width="1.800"/><path d="M4 4.600l12 12" stroke="#e53b3b" stroke-width="1.800"/></svg>
<span class="t " style="left:722px;top:350px">[b] Block IP</span>
<svg class="e" style="left:682.9px;top:372.7px" width="20" height="21" viewBox="0 0 20 21"><path d="M11.500 12L.8 1.800l7.200 5.400L10.600 1.500l1.300 5.300 7.200-5.200-4.200 6.700 4.900-.5-4.500 3 4.300 2.200-4.900.300 3.600 6.300-5.700-4.300-.9 5-2-4.900-4.900 4.200 2.500-5.600-6.500 1.500 5.500-3.800-5.600-2.300 6.100-.5z" fill="#f4511e"/><path d="M11.500 12L3.500 4.500l5.300 3.800 1.800-4 .9 3.800 5.500-4-3.300 5.400 3.700-.2-3.400 2.200 3 1.600-3.500.3 2.500 4.400-4-3-.7 3.500-1.400-3.400-3.500 3 1.700-4-4.500 1 3.900-2.700-4-1.700 4.400-.300z" fill="#ff9d0a"/><circle cx="11.400" cy="12.200" r="3.300" fill="#ffe14d"/><circle cx="11.400" cy="12.200" r="1.900" fill="#fffbe0"/></svg>
<span class="t " style="left:722px;top:372px">[k] Kill Connections</span>
<svg class="e" style="left:682.9px;top:394.7px" width="20" height="21" viewBox="0 0 20 21"><rect x="5.500" y="1.300" width="8.800" height="18.200" rx="1.400" fill="#424242"/><circle cx="9.900" cy="4.800" r="2.300" fill="#f23b30"/><circle cx="9.900" cy="10.500" r="2.300" fill="#fdd631"/><circle cx="9.900" cy="16.200" r="2.300" fill="#3fa846"/><circle cx="9.300" cy="4.100" r=".8" fill="#ff8a80" opacity=".7"/><circle cx="9.300" cy="9.800" r=".8" fill="#fff59d" opacity=".7"/><circle cx="9.300" cy="15.500" r=".8" fill="#81c784" opacity=".7"/></svg>
<span class="t " style="left:722px;top:394px">[l] Connection Limit</span>
<svg class="e" style="left:962.9px;top:328.7px" width="20" height="21" viewBox="0 0 20 21"><path d="M.4 9.600C.3 5.600 4.500 1.700 10.600 1.700c5.200 0 8.400 3.300 8.900 7.500.4 2.900-.6 4.600-2 5.600.2 1.500-1.600 2.500-3.600 2.500-1.800 0-3-.9-3.400-2.300-1.600.3-4.600.4-5.900-.5C2.400 14 .5 12.300.4 9.600z" fill="#f6acb0"/><path d="M10.700 14.600c1.800.4 4.900.5 6.800-.1.200 1.600-1.500 2.800-3.500 2.800-1.900 0-3.100-1.200-3.300-2.700z" fill="#e0686c"/><g fill="none" stroke="#ec8a90" stroke-width=".8"><path d="M2.500 7.500c1.500-1.500 2.500.5 4-.8s1.500-2.700 3.500-2.500M4.500 11.500c1-1.800 3-.5 4.200-2.200s3-1 4.300-2.700M7.500 13.800c1.500-1 2.800.3 4.200-1.200s2.700-.5 4.300-2M12 3.800c1 1.200 2.700.5 3.700 2.200M1.800 10.300c1 .3 1.700 1.500 2.700 1.200M14.500 8.500c1 .5 2 .2 3 1.200M6 5c.5-1 1.500-1.500 2.500-1.500"/></g><g fill="none" stroke="#fcd0d2" stroke-width=".8" opacity=".9"><path d="M3.500 5.800c1-1 2-1.300 3-1.300M9.500 6.500c1-.5 2-.5 3 .2M5.500 9.300c.8-.6 1.800-.8 2.600-.3M13 11c1-.6 2-.6 3-.2M3 12.300c.8.500 1.600.6 2.400.4M9 12c.8-.5 1.600-.5 2.400-.2M15.500 5.500c.8.600 1.300 1.400 1.600 2.300"/></g></svg>
<span class="t " style="left:992px;top:328px">PROCESS OPERATIONS</span>
<svg class="e" style="left:982.9px;top:350.7px" width="20" height="21" viewBox="0 0 20 21"><path d="M15.900.2L2.300 11.400l6.400.600L4 20.200 17.400 8.500l-6-.4z" fill="#fbc21b"/><path d="M15.900.2L2.300 11.400l6.400.600 1.200-2.100 1.500-1.800z" fill="#ffd54a" opacity=".55"/></svg>
<span class="t " style="left:1022px;top:350px">[h] Reload (SIGHUP)</span>
<svg class="e" style="left:982.9px;top:372.7px" width="20" height="21" viewBox="0 0 20 21"><path d="M10 .4c5 0 8.200 3 8.200 7.800v4.300c0 1.300-.8 2.100-2.100 2.600l-1 .4v3.100c0 1-.8 1.800-2 1.800H7c-1.200 0-2-.8-2-1.800v-3.100l-1-.4c-1.300-.5-2.100-1.300-2.100-2.600V8.200C1.900 3.400 5 .4 10 .4z" fill="#e1e8ed"/><circle cx="6.100" cy="10.300" r="2.050" fill="#454545"/><circle cx="13.900" cy="10.300" r="2.050" fill="#454545"/><path d="M9.900 11.400l1.300 2.900H8.600z" fill="#3a3a3a"/><path d="M7.200 17v2.600M10 17.200v2.900M12.700 17v2.600" stroke="#a9cfe0" stroke-width=".8"/></svg>
<span class="t " style="left:1022px;top:372px">[9] Force Kill (SIGKIL</span>
<svg class="e" style="left:982.9px;top:394.7px" width="20" height="21" viewBox="0 0 20 21"><rect x=".8" y="7.300" width="2.600" height="7.200" fill="#ffd7af"/><rect x="4.400" y="7.300" width="2.600" height="7.200" fill="#ffd7af"/></svg>
<span class="t " style="left:1022px;top:394px">[p] Pause Process</span>
<svg class="e" style="left:982.9px;top:416.7px" width="20" height="21" viewBox="0 0 20 21"><path d="M-.9 5.200v13.100L12.700 11.750z" fill="#ffd7af"/></svg>
<span class="t " style="left:1022px;top:416px">[c] Continue Process</span>
<svg class="e" style="left:982.9px;top:438.7px" width="20" height="21" viewBox="0 0 20 21"><ellipse cx="18.600" cy="9.800" rx="1.100" ry=".9" fill="#c6d83f"/><path d="M2.500 15.500c-.2 1.600 0 3.100.7 3.600h2.500c.6-.5.700-1.400.6-2.300 1.200.2 2.400.2 3.400.1 0 1.300.2 2.400.9 2.900h2.500c.6-.7.800-1.800.6-3.100 1.400-.300 2.600-.900 3.400-1.600 1-.9 1.400-2.300 1-4H5z" fill="#bfd143"/><path d="M5.600 10.900c.2-4.300 3-7 6.600-7 3.300 0 5.800 2.300 6 5.800.2 2.500-2.200 4.300-5.900 4.300-3.600 0-6.800-.9-6.700-3.100z" fill="#6a8f33"/><path d="M11.600 4.200c-1 3-.7 6.500.4 9.600M6.800 7.500c3.500-1.300 7.600-1.100 10.800.5" stroke="#55772a" stroke-width=".8" fill="none"/><circle cx="4.100" cy="11.300" r="4" fill="#bfd143"/><circle cx="2.600" cy="10.700" r=".7" fill="#2b2b2b"/><circle cx="5.500" cy="10.700" r=".7" fill="#2b2b2b"/><ellipse cx="4" cy="12.800" rx="1.100" ry=".55" fill="#7d8c2a"/></svg>
<span class="t " style="left:1022px;top:438px">[n] Renice</span>
<svg class="e" style="left:982.9px;top:460.7px" width="20" height="21" viewBox="0 0 20 21"><rect x=".2" y=".4" width="19.200" height="19.700" rx="1.300" fill="#8bb0c2"/><path d="M.2 18.800h19.200v.2c0 .6-.6 1.100-1.300 1.100H1.500c-.7 0-1.300-.5-1.300-1.100z" fill="#5a8ba0"/><path d="M2.300 6.500L6.900 2.300v3.100h6.500c2.300 0 3.600 2.300 3.300 5.700h-2.100c-.1-2.200-.8-3.700-2-3.700H6.900v3.200z" fill="#fcfcfc"/><path d="M17.100 13.700l-5 4.400v-3.200H6.300c-2.300 0-3.900-2.300-3.800-5.500h2.100c.1 2 .9 3.200 2.100 3.200h5.400V9.400z" fill="#fcfcfc"/></svg>
<span class="t " style="left:1022px;top:460px">[r] Restart Service</span>
<svg class="e" style="left:982.9px;top:482.7px" width="20" height="21" viewBox="0 0 20 21"><g fill="none" stroke="#cfae8e" stroke-width="1" opacity=".85"><path d="M3.200 7.600c0-2.800 1.700-4.300 4-4.300s4 1.500 4 4.300c0 1.400-.6 2.200-1.300 2.700v1.400H4.500v-1.400c-.7-.5-1.300-1.300-1.300-2.700z"/><path d="M1 9.900l12.300 5.700M13.300 9.900L1 15.600"/><path d="M5.300 13.800h3.800"/></g><circle cx="5.600" cy="8.700" r="1" fill="#cfae8e"/><circle cx="8.800" cy="8.700" r="1" fill="#cfae8e"/><g fill="#cfae8e" opacity=".85"><circle cx="1.100" cy="9.800" r=".9"/><circle cx="13.300" cy="9.800" r=".9"/><circle cx="1.300" cy="15.700" r=".9"/><circle cx="13.100" cy="15.700" r=".9"/></g></svg>
<span class="t " style="left:1022px;top:482px">[o] Adjust OOM Score</span>
<svg class="e" style="left:982.9px;top:504.7px" width="20" height="21" viewBox="0 0 20 21"><g fill="none" stroke="#5a6368" stroke-width=".9"><path d="M5.300 7.500C3.800 7.300 2.400 6 2.300 4.600c0-.8.600-1.500 1.300-1.400M10 5.400c-1-1.200-.8-3.200.6-4.100.8-.4 1.600 0 1.900.9.300 1 .5 2 .3 3M4 9v5l-2.500 1.300M4.600 15.600l1.200 2.600-1.300 1.500M16.400 8.700h2.300M17.200 11v4M16.600 14.500l2 1"/></g><path d="M5 5.800l5.500-2.600 1.300 1.800-5.600 3.700z" fill="#2d3033"/><rect x="5.200" y="6.200" width="1.300" height="1.800" rx=".4" fill="#f1e2a7"/><rect x="10.300" y="4" width="1.200" height="1.900" rx=".4" fill="#f1e2a7"/><path d="M4.300 8.500c2.500.2 4.300-.2 5.700-1 1.400-.9 2.400-2.300 3.500-2.600 2.600 1.800 4.200 5.200 3.300 8.700-.9 3.300-3.800 5.100-6.900 4.900-3.300-.3-5.600-3-5.900-6.100-.100-1.400-.100-2.700.3-3.900z" fill="#fb1c1c"/><path d="M10 7.500c.7 3.500 1.200 7.200.9 10.900" stroke="#d81b1b" stroke-width=".7" fill="none"/><g fill="#263238"><circle cx="5.500" cy="11" r="1"/><circle cx="8.500" cy="11.800" r="1.500"/><circle cx="9.200" cy="15.200" r="1.100"/><circle cx="12.700" cy="10.400" r="1.400"/><circle cx="14.300" cy="8.300" r=".9"/><circle cx="14" cy="13.400" r="1.100"/></g></svg>
<span class="t " style="left:1022px;top:504px">[d] Debug Dump</span>
<span class="t " style="left:662px;top:548px">[ESC] Cancel</span>
</div></body></html>
